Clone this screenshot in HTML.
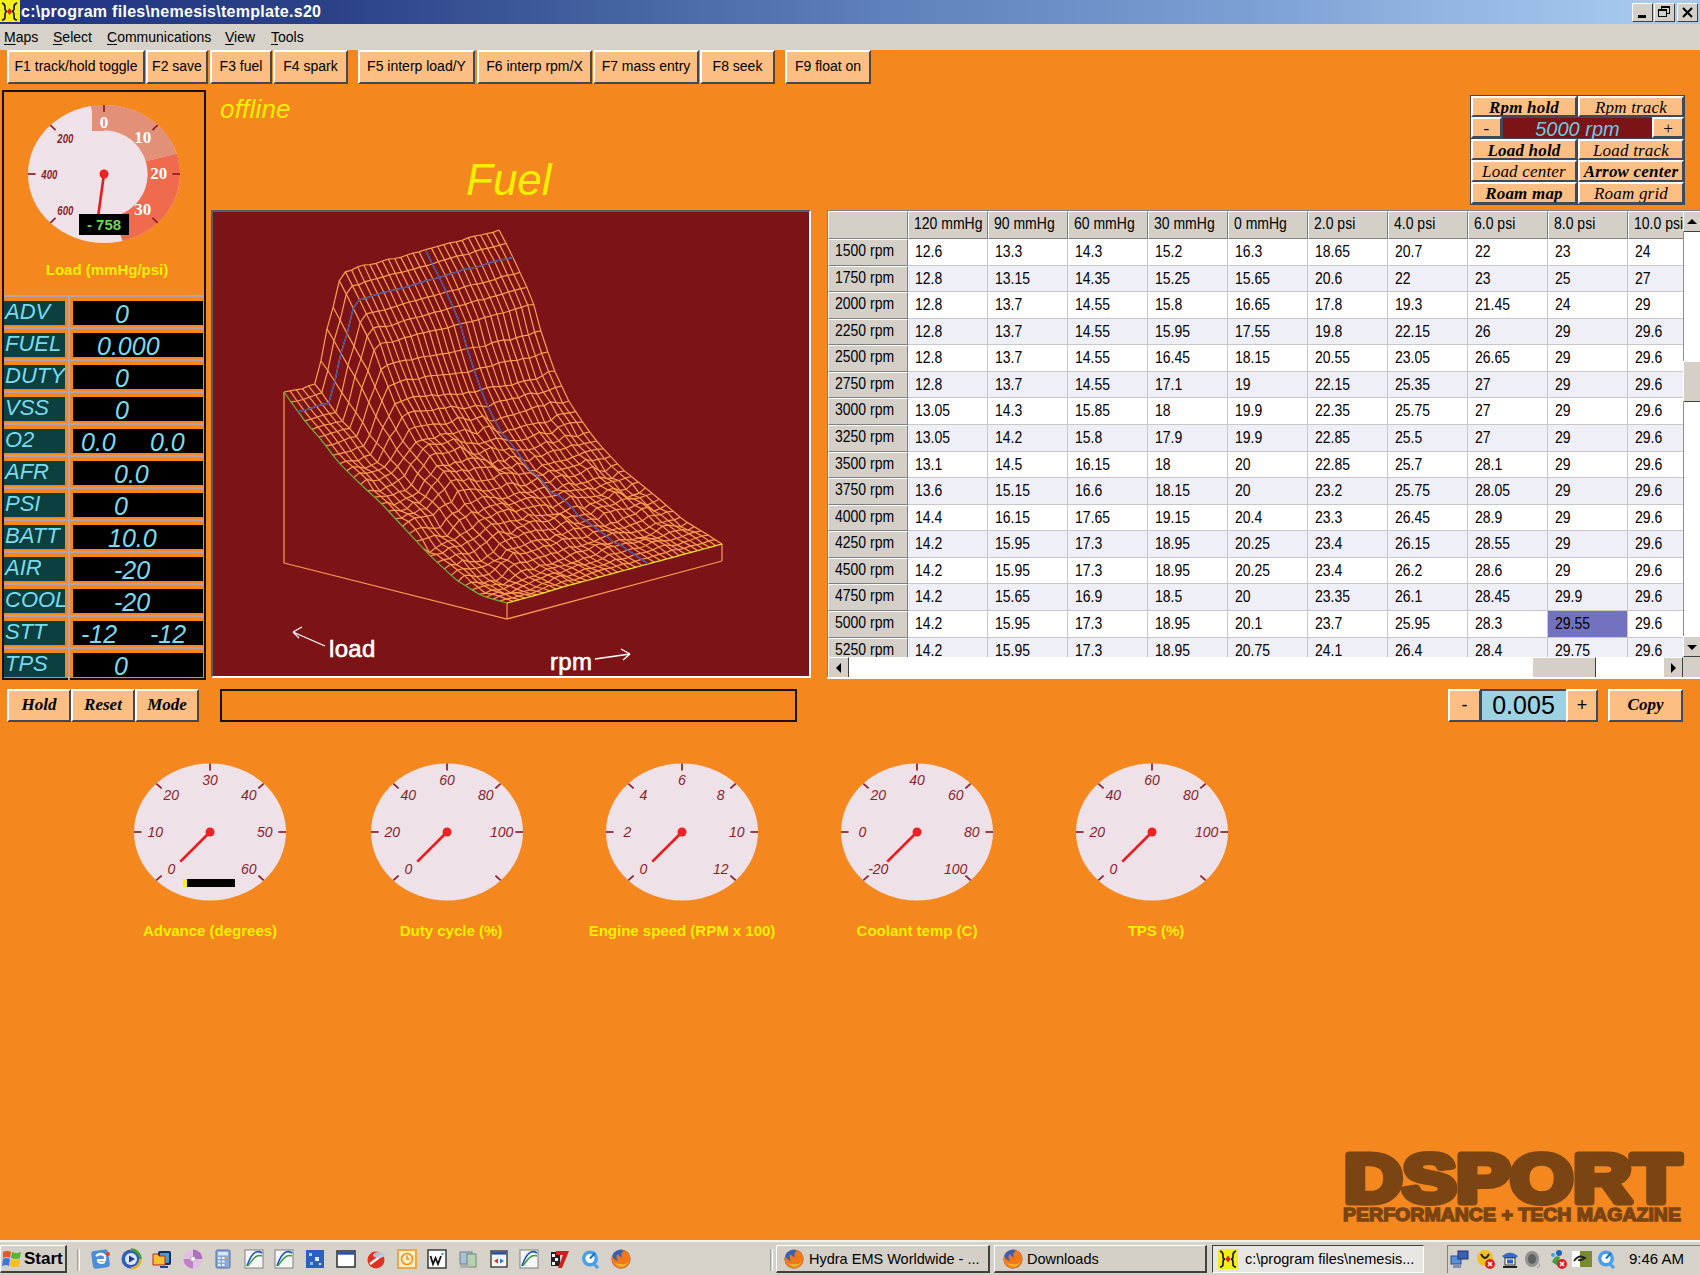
<!DOCTYPE html><html><head><meta charset="utf-8"><style>
*{box-sizing:border-box}
body{margin:0;width:1700px;height:1275px;overflow:hidden;background:#F5871F;position:relative;font-family:"Liberation Sans",sans-serif}
.a{position:absolute}
.btn{position:absolute;background:#FCBE82;border-top:2px solid #fff;border-left:2px solid #fff;border-right:2px solid #3E4A5A;border-bottom:2px solid #3E4A5A;color:#000;text-align:center;white-space:nowrap;overflow:hidden}
.fk{font-size:14px;line-height:28px}
.sv{font-family:"Liberation Serif",serif;font-style:italic}
.t{white-space:nowrap}
.ty{display:inline-block;transform:scaleY(1.17);transform-origin:0 16px}
</style></head><body>

<div class="a" style="left:0;top:0;width:1700px;height:24px;background:linear-gradient(to right,#203584 0%,#2A4186 19%,#4866A4 38%,#5E80BC 52%,#7A9DD2 72%,#92B5E2 85%,#A6C8EE 96%,#A8CAEE 100%)"></div>
<svg class="a" style="left:0;top:0" width="21" height="23" viewBox="0 0 21 23">
<rect x="0" y="0" width="20" height="22" fill="#F2EE1A"/>
<path d="M2 3 Q5 4 5 7 L5 9 Q5 11 7 11.5 Q5 12 5 14 L5 17 Q5 20 2 20" stroke="#111" stroke-width="1.6" fill="none"/>
<path d="M17 3 Q14 4 14 7 L14 9 Q14 11 12 11.5 Q14 12 14 14 L14 17 Q14 20 17 20" stroke="#111" stroke-width="1.6" fill="none"/>
<polygon points="9.5,8 12,11.5 9.5,15 7,11.5" fill="#E01818"/>
</svg>
<div class="a t" style="left:21px;top:3px;font:bold 16px 'Liberation Sans';color:#fff;letter-spacing:0.28px">c:\program files\nemesis\template.s20</div>
<div class="a" style="left:1632px;top:3px;width:21px;height:19px;background:#D4D0C8;border-top:1px solid #fff;border-left:1px solid #fff;border-right:1px solid #404040;border-bottom:1px solid #404040"></div><div class="a" style="left:1638px;top:15px;width:8px;height:3px;background:#000"></div>
<div class="a" style="left:1654px;top:3px;width:21px;height:19px;background:#D4D0C8;border-top:1px solid #fff;border-left:1px solid #fff;border-right:1px solid #404040;border-bottom:1px solid #404040"></div><div class="a" style="left:1661px;top:6px;width:9px;height:8px;border:1px solid #000;border-top-width:2px"></div><div class="a" style="left:1658px;top:9px;width:9px;height:8px;border:1px solid #000;border-top-width:2px;background:#D4D0C8"></div>
<div class="a" style="left:1677px;top:3px;width:21px;height:19px;background:#D4D0C8;border-top:1px solid #fff;border-left:1px solid #fff;border-right:1px solid #404040;border-bottom:1px solid #404040"></div><svg class="a" style="left:1677px;top:3px" width="21" height="19"><path d="M6 5 L15 14 M15 5 L6 14" stroke="#000" stroke-width="2"/></svg>
<div class="a" style="left:0;top:24px;width:1700px;height:26px;background:#D6D2CA"></div>
<div class="a t" style="left:4px;top:29px;font-size:14px;color:#000"><u style="text-decoration-thickness:1px;text-underline-offset:2px">M</u>aps</div>
<div class="a t" style="left:53px;top:29px;font-size:14px;color:#000"><u style="text-decoration-thickness:1px;text-underline-offset:2px">S</u>elect</div>
<div class="a t" style="left:107px;top:29px;font-size:14px;color:#000"><u style="text-decoration-thickness:1px;text-underline-offset:2px">C</u>ommunications</div>
<div class="a t" style="left:225px;top:29px;font-size:14px;color:#000"><u style="text-decoration-thickness:1px;text-underline-offset:2px">V</u>iew</div>
<div class="a t" style="left:271px;top:29px;font-size:14px;color:#000"><u style="text-decoration-thickness:1px;text-underline-offset:2px">T</u>ools</div>
<div class="btn fk" style="left:7px;top:50px;width:138px;height:34px">F1 track/hold toggle</div>
<div class="btn fk" style="left:146px;top:50px;width:62px;height:34px">F2 save</div>
<div class="btn fk" style="left:210px;top:50px;width:62px;height:34px">F3 fuel</div>
<div class="btn fk" style="left:273px;top:50px;width:75px;height:34px">F4 spark</div>
<div class="btn fk" style="left:358px;top:50px;width:117px;height:34px">F5 interp load/Y</div>
<div class="btn fk" style="left:477px;top:50px;width:115px;height:34px">F6 interp rpm/X</div>
<div class="btn fk" style="left:593px;top:50px;width:106px;height:34px">F7 mass entry</div>
<div class="btn fk" style="left:700px;top:50px;width:75px;height:34px">F8 seek</div>
<div class="btn fk" style="left:785px;top:50px;width:86px;height:34px">F9 float on</div>
<div class="a" style="left:2px;top:90px;width:204px;height:590px;border:2px solid #1A1008"></div>
<svg class="a" style="left:24px;top:99px" width="160" height="150" viewBox="24 99 160 150"><ellipse cx="104" cy="174" rx="76" ry="69" fill="#EEE1E8"/><polygon points="90.8,106.0 95.3,105.4 99.9,105.1 104.5,105.0 109.1,105.2 113.6,105.6 118.2,106.2 122.7,107.1 127.1,108.3 131.4,109.6 135.6,111.3 139.7,113.1 143.7,115.2 147.5,117.4 151.2,119.9 154.7,122.6 158.1,125.5 161.2,128.5 164.1,131.8 166.8,135.1 169.3,138.6 171.5,142.3 173.5,146.0 175.2,149.9 176.7,153.8 145.7,161.3 144.9,158.8 143.9,156.3 142.7,154.0 141.4,151.7 140.0,149.4 138.5,147.3 136.8,145.3 135.0,143.4 133.1,141.5 131.1,139.8 129.0,138.3 126.8,136.8 124.5,135.5 122.1,134.4 119.7,133.3 117.2,132.5 114.7,131.7 112.1,131.2 109.5,130.8 106.9,130.5 104.3,130.4 101.7,130.5 99.0,130.7 96.4,131.1" fill="#E39078"/><polygon points="176.7,153.8 178.0,158.3 179.0,162.9 179.7,167.5 180.0,172.2 179.9,176.9 179.5,181.5 178.8,186.1 177.7,190.7 176.3,195.2 174.6,199.6 172.5,203.8 170.1,208.0 167.5,212.0 164.5,215.8 161.2,219.4 157.7,222.8 154.0,226.0 150.0,228.9 145.8,231.6 141.4,234.1 136.9,236.2 132.2,238.1 127.3,239.7 122.4,241.0 114.5,216.3 117.4,215.5 120.2,214.5 122.9,213.3 125.5,211.9 128.0,210.4 130.4,208.7 132.7,206.8 134.8,204.8 136.8,202.7 138.7,200.4 140.4,198.0 141.9,195.5 143.3,192.9 144.5,190.2 145.5,187.4 146.3,184.5 146.9,181.7 147.3,178.7 147.6,175.8 147.6,172.9 147.4,169.9 147.0,167.0 146.5,164.1 145.7,161.3" fill="#F06A4E"/><rect x="92" y="105" width="12" height="26" fill="#E39078"/><line x1="50.3" y1="222.8" x2="55.6" y2="217.9" stroke="#8A1E2A" stroke-width="1.7"/><text x="65.3" y="215.1" font-family="Liberation Sans" font-style="italic" font-weight="bold" font-size="12" fill="#8A1E2A" textLength="16" lengthAdjust="spacingAndGlyphs" text-anchor="middle">600</text><line x1="28.0" y1="174.0" x2="35.6" y2="174.0" stroke="#8A1E2A" stroke-width="1.7"/><text x="49.3" y="179.0" font-family="Liberation Sans" font-style="italic" font-weight="bold" font-size="12" fill="#8A1E2A" textLength="16" lengthAdjust="spacingAndGlyphs" text-anchor="middle">400</text><line x1="50.3" y1="125.2" x2="55.6" y2="130.1" stroke="#8A1E2A" stroke-width="1.7"/><text x="65.3" y="142.9" font-family="Liberation Sans" font-style="italic" font-weight="bold" font-size="12" fill="#8A1E2A" textLength="16" lengthAdjust="spacingAndGlyphs" text-anchor="middle">200</text><line x1="104.0" y1="105.0" x2="104.0" y2="111.9" stroke="#8A1E2A" stroke-width="1.7"/><text x="104.0" y="127.9" font-family="Liberation Serif" font-weight="bold" font-size="17" fill="#FFFFFF" text-anchor="middle">0</text><line x1="157.7" y1="125.2" x2="152.4" y2="130.1" stroke="#8A1E2A" stroke-width="1.7"/><text x="142.7" y="142.9" font-family="Liberation Serif" font-weight="bold" font-size="17" fill="#FFFFFF" text-anchor="middle">10</text><line x1="180.0" y1="174.0" x2="172.4" y2="174.0" stroke="#8A1E2A" stroke-width="1.7"/><text x="158.7" y="179.0" font-family="Liberation Serif" font-weight="bold" font-size="17" fill="#FFFFFF" text-anchor="middle">20</text><line x1="157.7" y1="222.8" x2="152.4" y2="217.9" stroke="#8A1E2A" stroke-width="1.7"/><text x="142.7" y="215.1" font-family="Liberation Serif" font-weight="bold" font-size="17" fill="#FFFFFF" text-anchor="middle">30</text><line x1="104" y1="174" x2="98.2" y2="215.6" stroke="#F01818" stroke-width="2.6"/><circle cx="104" cy="174" r="4.5" fill="#EE2222"/></svg>
<div class="a t" style="left:79px;top:214px;width:50px;height:21px;background:#000;color:#6FD657;font:bold 15px 'Liberation Sans';text-align:center;line-height:21px">- 758</div>
<div class="a t" style="left:4px;top:261px;width:206px;text-align:center;font:bold 15px 'Liberation Sans';color:#F5F000">Load (mmHg/psi)</div>
<div class="a" style="left:4px;top:295px;width:200px;height:2px;background:#B4A2B0"></div>
<div class="a" style="left:4px;top:301px;width:61px;height:24px;background:#0C3F40"></div>
<div class="a" style="left:73px;top:301px;width:130px;height:24px;background:#000"></div>
<div class="a" style="left:4px;top:327px;width:200px;height:2px;background:#B4A2B0"></div>
<div class="a" style="left:4px;top:333px;width:61px;height:24px;background:#0C3F40"></div>
<div class="a" style="left:73px;top:333px;width:130px;height:24px;background:#000"></div>
<div class="a" style="left:4px;top:359px;width:200px;height:2px;background:#B4A2B0"></div>
<div class="a" style="left:4px;top:365px;width:61px;height:24px;background:#0C3F40"></div>
<div class="a" style="left:73px;top:365px;width:130px;height:24px;background:#000"></div>
<div class="a" style="left:4px;top:391px;width:200px;height:2px;background:#B4A2B0"></div>
<div class="a" style="left:4px;top:397px;width:61px;height:24px;background:#0C3F40"></div>
<div class="a" style="left:73px;top:397px;width:130px;height:24px;background:#000"></div>
<div class="a" style="left:4px;top:423px;width:200px;height:2px;background:#B4A2B0"></div>
<div class="a" style="left:4px;top:429px;width:61px;height:24px;background:#0C3F40"></div>
<div class="a" style="left:73px;top:429px;width:130px;height:24px;background:#000"></div>
<div class="a" style="left:4px;top:455px;width:200px;height:2px;background:#B4A2B0"></div>
<div class="a" style="left:4px;top:461px;width:61px;height:24px;background:#0C3F40"></div>
<div class="a" style="left:73px;top:461px;width:130px;height:24px;background:#000"></div>
<div class="a" style="left:4px;top:487px;width:200px;height:2px;background:#B4A2B0"></div>
<div class="a" style="left:4px;top:493px;width:61px;height:24px;background:#0C3F40"></div>
<div class="a" style="left:73px;top:493px;width:130px;height:24px;background:#000"></div>
<div class="a" style="left:4px;top:519px;width:200px;height:2px;background:#B4A2B0"></div>
<div class="a" style="left:4px;top:525px;width:61px;height:24px;background:#0C3F40"></div>
<div class="a" style="left:73px;top:525px;width:130px;height:24px;background:#000"></div>
<div class="a" style="left:4px;top:551px;width:200px;height:2px;background:#B4A2B0"></div>
<div class="a" style="left:4px;top:557px;width:61px;height:24px;background:#0C3F40"></div>
<div class="a" style="left:73px;top:557px;width:130px;height:24px;background:#000"></div>
<div class="a" style="left:4px;top:583px;width:200px;height:2px;background:#B4A2B0"></div>
<div class="a" style="left:4px;top:589px;width:61px;height:24px;background:#0C3F40"></div>
<div class="a" style="left:73px;top:589px;width:130px;height:24px;background:#000"></div>
<div class="a" style="left:4px;top:615px;width:200px;height:2px;background:#B4A2B0"></div>
<div class="a" style="left:4px;top:621px;width:61px;height:24px;background:#0C3F40"></div>
<div class="a" style="left:73px;top:621px;width:130px;height:24px;background:#000"></div>
<div class="a" style="left:4px;top:647px;width:200px;height:2px;background:#B4A2B0"></div>
<div class="a" style="left:4px;top:653px;width:61px;height:24px;background:#0C3F40"></div>
<div class="a" style="left:73px;top:653px;width:130px;height:24px;background:#000"></div>
<div class="a" style="left:68px;top:295px;width:2px;height:385px;background:#B4A2B0"></div>
<svg class="a" style="left:0;top:280px" width="210" height="410" viewBox="0 280 210 410"><text x="5" y="319" font-family="Liberation Sans" font-style="italic" font-size="22" fill="#7ADBEE">ADV</text><text x="115" y="323" font-family="Liberation Sans" font-style="italic" font-size="25" fill="#7ADBEE">0</text><text x="5" y="351" font-family="Liberation Sans" font-style="italic" font-size="22" fill="#7ADBEE">FUEL</text><text x="97" y="355" font-family="Liberation Sans" font-style="italic" font-size="25" fill="#7ADBEE">0.000</text><text x="5" y="383" font-family="Liberation Sans" font-style="italic" font-size="22" fill="#7ADBEE">DUTY</text><text x="115" y="387" font-family="Liberation Sans" font-style="italic" font-size="25" fill="#7ADBEE">0</text><text x="5" y="415" font-family="Liberation Sans" font-style="italic" font-size="22" fill="#7ADBEE">VSS</text><text x="115" y="419" font-family="Liberation Sans" font-style="italic" font-size="25" fill="#7ADBEE">0</text><text x="5" y="447" font-family="Liberation Sans" font-style="italic" font-size="22" fill="#7ADBEE">O2</text><text x="81" y="451" font-family="Liberation Sans" font-style="italic" font-size="25" fill="#7ADBEE">0.0</text><text x="150" y="451" font-family="Liberation Sans" font-style="italic" font-size="25" fill="#7ADBEE">0.0</text><text x="5" y="479" font-family="Liberation Sans" font-style="italic" font-size="22" fill="#7ADBEE">AFR</text><text x="114" y="483" font-family="Liberation Sans" font-style="italic" font-size="25" fill="#7ADBEE">0.0</text><text x="5" y="511" font-family="Liberation Sans" font-style="italic" font-size="22" fill="#7ADBEE">PSI</text><text x="114" y="515" font-family="Liberation Sans" font-style="italic" font-size="25" fill="#7ADBEE">0</text><text x="5" y="543" font-family="Liberation Sans" font-style="italic" font-size="22" fill="#7ADBEE">BATT</text><text x="108" y="547" font-family="Liberation Sans" font-style="italic" font-size="25" fill="#7ADBEE">10.0</text><text x="5" y="575" font-family="Liberation Sans" font-style="italic" font-size="22" fill="#7ADBEE">AIR</text><text x="114" y="579" font-family="Liberation Sans" font-style="italic" font-size="25" fill="#7ADBEE">-20</text><text x="5" y="607" font-family="Liberation Sans" font-style="italic" font-size="22" fill="#7ADBEE">COOL</text><text x="114" y="611" font-family="Liberation Sans" font-style="italic" font-size="25" fill="#7ADBEE">-20</text><text x="5" y="639" font-family="Liberation Sans" font-style="italic" font-size="22" fill="#7ADBEE">STT</text><text x="81" y="643" font-family="Liberation Sans" font-style="italic" font-size="25" fill="#7ADBEE">-12</text><text x="150" y="643" font-family="Liberation Sans" font-style="italic" font-size="25" fill="#7ADBEE">-12</text><text x="5" y="671" font-family="Liberation Sans" font-style="italic" font-size="22" fill="#7ADBEE">TPS</text><text x="114" y="675" font-family="Liberation Sans" font-style="italic" font-size="25" fill="#7ADBEE">0</text></svg>
<div class="a t" style="left:220px;top:93.5px;font:italic 26px 'Liberation Sans';color:#F5F000;letter-spacing:0.2px">offline</div>
<div class="a t" style="left:466px;top:155px;font:italic 44px 'Liberation Sans';color:#F5F000">Fuel</div>
<div class="a" style="left:211px;top:210px;width:600px;height:468px;background:#7C1417;border-top:2px solid #50606C;border-left:2px solid #50606C;border-right:2px solid #fff;border-bottom:2px solid #fff"></div>
<svg class="a" style="left:213px;top:212px" width="596" height="464" viewBox="213 212 596 464"><polyline points="284.0,563.0 507.0,619.0 722.0,561.0" stroke="#F89A50" stroke-width="1.25" fill="none"/><polyline points="284.0,563.0 284.0,392.0" stroke="#F89A50" stroke-width="1.25" fill="none"/><polyline points="507.0,619.0 507.0,603.0" stroke="#F89A50" stroke-width="1.25" fill="none"/><polyline points="722.0,561.0 722.0,544.0" stroke="#F89A50" stroke-width="1.25" fill="none"/><polyline points="500.0,601.1 506.2,598.8 512.3,597.8 518.5,596.2 524.6,594.4 530.7,593.9 536.9,591.3 543.0,588.5 549.2,585.5 555.3,585.0 561.5,582.2 567.6,580.3 573.7,580.0 579.9,577.9 586.0,575.4 592.2,572.7 598.3,570.8 604.5,568.9 610.6,568.0 616.7,566.3 622.9,563.6 629.0,563.6 635.2,561.3 641.3,559.3 647.5,558.0 653.6,556.2 659.7,554.2 665.9,552.6 672.0,549.9 678.2,549.7 684.3,548.4 690.5,545.9 696.6,544.8 702.7,543.4 708.9,540.9 715.0,539.6" stroke="#F89A50" stroke-width="1.25" fill="none"/><polyline points="493.1,599.2 499.2,596.2 505.3,594.3 511.5,593.0 517.6,592.7 523.8,591.5 529.9,589.9 536.1,587.0 542.2,583.5 548.3,582.1 554.5,577.8 560.6,575.5 566.8,576.6 572.9,574.6 579.1,571.6 585.2,568.7 591.3,568.4 597.5,566.5 603.6,564.8 609.8,562.4 615.9,559.2 622.1,559.3 628.2,557.4 634.3,554.6 640.5,553.3 646.6,552.0 652.8,549.8 658.9,547.0 665.1,545.0 671.2,545.5 677.3,545.1 683.5,542.1 689.6,540.5 695.8,538.0 701.9,536.0 708.1,535.1" stroke="#F89A50" stroke-width="1.25" fill="none"/><polyline points="486.1,597.2 492.2,594.2 498.4,592.2 504.5,593.7 510.7,592.8 516.8,589.1 523.0,585.9 529.1,583.5 535.2,579.9 541.4,578.4 547.5,574.9 553.7,572.8 559.8,573.2 566.0,570.2 572.1,567.6 578.2,564.8 584.4,564.9 590.5,563.0 596.7,561.0 602.8,558.6 609.0,554.4 615.1,553.7 621.2,552.5 627.4,550.1 633.5,548.4 639.7,548.2 645.8,545.5 652.0,541.9 658.1,540.9 664.2,540.8 670.4,540.4 676.5,538.3 682.7,536.5 688.8,533.6 695.0,532.2 701.1,530.8" stroke="#F89A50" stroke-width="1.25" fill="none"/><polyline points="479.1,594.3 485.3,593.1 491.4,589.9 497.6,589.8 503.7,588.8 509.8,585.6 516.0,582.9 522.1,580.1 528.3,577.3 534.4,576.0 540.6,572.7 546.7,569.0 552.8,568.0 559.0,566.3 565.1,565.5 571.3,562.9 577.4,561.4 583.6,558.0 589.7,556.9 595.8,554.7 602.0,550.0 608.1,546.9 614.3,546.5 620.4,544.6 626.6,543.0 632.7,543.3 638.8,541.6 645.0,539.1 651.1,538.6 657.3,538.0 663.4,535.6 669.6,532.2 675.7,530.9 681.8,529.7 688.0,530.0 694.1,526.6" stroke="#F89A50" stroke-width="1.25" fill="none"/><polyline points="472.2,589.9 478.3,587.4 484.4,585.8 490.6,585.5 496.7,584.1 502.9,584.9 509.0,580.8 515.2,575.2 521.3,570.9 527.4,569.4 533.6,569.5 539.7,565.2 545.9,565.0 552.0,563.9 558.2,560.6 564.3,558.7 570.4,554.9 576.6,551.9 582.7,551.4 588.9,549.4 595.0,545.0 601.2,543.6 607.3,544.4 613.4,542.3 619.6,539.5 625.7,539.5 631.9,539.8 638.0,537.9 644.2,537.4 650.3,534.8 656.4,531.1 662.6,526.2 668.7,525.2 674.9,525.8 681.0,526.8 687.2,522.4" stroke="#F89A50" stroke-width="1.25" fill="none"/><polyline points="465.2,585.5 471.3,582.1 477.5,582.4 483.6,583.1 489.8,580.5 495.9,581.1 502.0,576.6 508.2,569.0 514.3,564.3 520.5,562.2 526.6,562.4 532.8,559.7 538.9,557.3 545.0,556.1 551.2,553.3 557.3,552.7 563.5,549.4 569.6,546.3 575.8,547.3 581.9,545.7 588.0,543.4 594.2,541.4 600.3,538.4 606.5,535.9 612.6,533.1 618.8,532.6 624.9,532.4 631.0,532.9 637.2,531.3 643.3,530.2 649.5,527.0 655.6,523.3 661.8,522.5 667.9,520.6 674.0,519.8 680.2,517.3" stroke="#F89A50" stroke-width="1.25" fill="none"/><polyline points="458.2,581.2 464.4,575.4 470.5,575.3 476.6,576.6 482.8,575.7 488.9,574.4 495.1,569.2 501.2,562.7 507.4,560.1 513.5,552.4 519.6,553.8 525.8,553.1 531.9,551.2 538.1,549.0 544.2,545.7 550.4,545.8 556.5,543.0 562.6,538.7 568.8,538.9 574.9,538.0 581.1,538.4 587.2,536.7 593.4,531.8 599.5,530.8 605.6,530.4 611.8,529.8 617.9,528.5 624.1,527.8 630.2,525.2 636.4,522.8 642.5,520.7 648.6,516.0 654.8,515.4 660.9,514.7 667.1,511.9 673.2,511.3" stroke="#F89A50" stroke-width="1.25" fill="none"/><polyline points="451.2,575.4 457.4,570.0 463.5,568.7 469.7,568.9 475.8,568.4 482.0,566.9 488.1,564.6 494.2,560.8 500.4,558.2 506.5,549.7 512.7,548.6 518.8,547.3 525.0,544.8 531.1,541.4 537.2,540.1 543.4,539.3 549.5,539.6 555.7,534.7 561.8,534.7 568.0,531.5 574.1,528.3 580.2,528.7 586.4,526.7 592.5,525.6 598.7,525.9 604.8,526.4 611.0,522.7 617.1,522.3 623.2,518.2 629.4,516.2 635.5,513.9 641.7,508.7 647.8,507.4 654.0,511.0 660.1,508.6 666.2,505.3" stroke="#F89A50" stroke-width="1.25" fill="none"/><polyline points="444.3,568.9 450.4,564.3 456.6,564.8 462.7,560.0 468.9,561.7 475.0,561.7 481.1,561.2 487.3,555.9 493.4,551.9 499.6,543.7 505.7,540.8 511.9,538.0 518.0,536.7 524.1,533.1 530.3,531.8 536.4,530.0 542.6,530.7 548.7,529.3 554.9,529.1 561.0,524.2 567.1,521.0 573.3,523.1 579.4,523.7 585.6,520.5 591.7,518.9 597.9,519.7 604.0,513.0 610.1,511.8 616.3,509.6 622.4,509.1 628.6,508.8 634.7,505.4 640.9,502.6 647.0,505.1 653.1,502.2 659.3,499.3" stroke="#F89A50" stroke-width="1.25" fill="none"/><polyline points="437.3,562.4 443.5,559.7 449.6,558.6 455.7,554.5 461.9,553.4 468.0,554.0 474.2,551.4 480.3,546.3 486.5,542.2 492.6,536.2 498.7,531.5 504.9,532.8 511.0,533.8 517.2,527.9 523.3,525.8 529.5,521.9 535.6,520.6 541.7,521.7 547.9,521.4 554.0,518.1 560.2,513.4 566.3,517.5 572.5,515.9 578.6,516.2 584.7,514.2 590.9,514.1 597.0,507.8 603.2,506.4 609.3,505.8 615.5,503.6 621.6,499.5 627.7,498.7 633.9,498.9 640.0,497.7 646.2,495.5 652.3,493.5" stroke="#F89A50" stroke-width="1.25" fill="none"/><polyline points="430.3,555.9 436.5,554.3 442.6,553.1 448.8,547.9 454.9,546.3 461.1,546.0 467.2,541.8 473.3,539.3 479.5,534.8 485.6,528.6 491.8,523.7 497.9,524.2 504.1,522.7 510.2,520.8 516.3,520.7 522.5,519.3 528.6,514.4 534.8,515.5 540.9,515.7 547.1,514.9 553.2,514.6 559.3,514.1 565.5,510.9 571.6,507.2 577.8,506.1 583.9,508.8 590.1,503.7 596.2,502.4 602.3,499.5 608.5,498.0 614.6,491.9 620.8,493.2 626.9,497.6 633.1,495.1 639.2,493.2 645.3,487.8" stroke="#F89A50" stroke-width="1.25" fill="none"/><polyline points="423.4,548.6 429.5,552.6 435.7,547.8 441.8,544.3 447.9,541.0 454.1,540.0 460.2,534.7 466.4,531.7 472.5,527.7 478.7,520.9 484.8,518.3 490.9,517.0 497.1,512.6 503.2,510.6 509.4,509.2 515.5,511.7 521.7,509.1 527.8,507.6 533.9,506.3 540.1,505.1 546.2,505.0 552.4,507.8 558.5,504.4 564.7,500.4 570.8,495.9 576.9,497.6 583.1,497.3 589.2,497.1 595.4,496.3 601.5,495.4 607.7,489.8 613.8,488.4 619.9,490.3 626.1,489.4 632.2,483.8 638.4,482.2" stroke="#F89A50" stroke-width="1.25" fill="none"/><polyline points="416.4,541.1 422.5,539.7 428.7,537.6 434.8,535.1 441.0,536.7 447.1,536.1 453.3,527.5 459.4,520.0 465.5,517.1 471.7,511.6 477.8,513.2 484.0,508.6 490.1,506.2 496.3,504.5 502.4,503.0 508.5,505.1 514.7,503.0 520.8,500.1 527.0,498.2 533.1,497.0 539.3,498.4 545.4,497.5 551.5,496.3 557.7,494.8 563.8,491.0 570.0,491.1 576.1,489.6 582.3,490.1 588.4,487.9 594.5,489.3 600.7,485.8 606.8,483.0 613.0,481.4 619.1,480.5 625.3,478.2 631.4,476.5" stroke="#F89A50" stroke-width="1.25" fill="none"/><polyline points="409.4,533.6 415.6,529.5 421.7,527.5 427.9,527.9 434.0,528.3 440.2,527.7 446.3,519.0 452.4,513.3 458.6,511.2 464.7,504.0 470.9,503.0 477.0,499.7 483.2,496.3 489.3,497.2 495.4,497.5 501.6,498.8 507.7,497.6 513.9,494.2 520.0,492.1 526.2,492.7 532.3,491.8 538.4,489.2 544.6,486.8 550.7,492.4 556.9,489.8 563.0,485.3 569.2,482.9 575.3,484.9 581.4,483.1 587.6,481.8 593.7,478.9 599.9,477.5 606.0,478.2 612.2,478.4 618.3,472.1 624.4,470.9" stroke="#F89A50" stroke-width="1.25" fill="none"/><polyline points="402.5,526.2 408.6,521.6 414.8,517.9 420.9,517.2 427.0,516.2 433.2,515.0 439.3,508.5 445.5,504.4 451.6,502.3 457.8,490.9 463.9,490.1 470.0,489.1 476.2,489.1 482.3,490.9 488.5,490.8 494.6,489.0 500.8,487.7 506.9,483.4 513.0,483.0 519.2,485.5 525.3,485.5 531.5,481.9 537.6,478.1 543.8,482.6 549.9,482.5 556.0,477.1 562.2,475.0 568.3,477.0 574.5,476.0 580.6,473.4 586.8,469.0 592.9,466.7 599.0,470.5 605.2,471.6 611.3,466.1 617.5,463.9" stroke="#F89A50" stroke-width="1.25" fill="none"/><polyline points="395.5,518.7 401.6,518.1 407.8,513.9 413.9,513.4 420.1,509.0 426.2,508.8 432.4,501.7 438.5,494.3 444.6,489.2 450.8,481.2 456.9,479.3 463.1,481.2 469.2,478.1 475.4,481.3 481.5,480.9 487.6,480.0 493.8,478.8 499.9,473.5 506.1,473.2 512.2,472.8 518.4,474.6 524.5,473.4 530.6,472.6 536.8,475.3 542.9,475.1 549.1,470.4 555.2,470.8 561.4,469.3 567.5,467.9 573.6,466.1 579.8,464.4 585.9,459.4 592.1,460.8 598.2,459.2 604.4,458.6 610.5,456.4" stroke="#F89A50" stroke-width="1.25" fill="none"/><polyline points="388.5,511.2 394.7,510.1 400.8,510.9 407.0,508.6 413.1,502.1 419.2,503.0 425.4,496.6 431.5,486.6 437.7,480.1 443.8,471.2 450.0,471.0 456.1,471.9 462.2,469.6 468.4,471.4 474.5,468.1 480.7,467.3 486.8,467.3 493.0,466.6 499.1,470.3 505.2,467.9 511.4,467.9 517.5,463.0 523.7,464.7 529.8,470.5 536.0,470.7 542.1,465.0 548.2,464.0 554.4,462.2 560.5,461.0 566.7,459.8 572.8,457.1 579.0,454.6 585.1,451.9 591.2,450.4 597.4,449.3 603.5,448.8" stroke="#F89A50" stroke-width="1.25" fill="none"/><polyline points="381.6,503.7 387.7,502.5 393.8,505.0 400.0,501.8 406.1,498.3 412.3,495.9 418.4,492.1 424.6,480.5 430.7,474.4 436.8,465.8 443.0,465.1 449.1,465.5 455.3,462.0 461.4,462.1 467.6,458.6 473.7,458.0 479.8,459.0 486.0,460.2 492.1,464.0 498.3,460.2 504.4,461.5 510.6,456.4 516.7,457.0 522.8,460.0 529.0,461.0 535.1,456.0 541.3,456.6 547.4,452.7 553.6,450.4 559.7,449.8 565.8,448.1 572.0,445.0 578.1,445.3 584.3,443.4 590.4,442.4 596.6,441.0" stroke="#F89A50" stroke-width="1.25" fill="none"/><polyline points="374.6,497.1 380.7,496.4 386.9,496.1 393.0,494.8 399.2,491.5 405.3,490.6 411.5,484.8 417.6,473.5 423.7,465.7 429.9,455.8 436.0,453.2 442.2,453.6 448.3,452.5 454.5,449.9 460.6,446.6 466.7,450.8 472.9,454.0 479.0,453.8 485.2,450.0 491.3,447.5 497.5,449.5 503.6,450.4 509.7,448.1 515.9,450.4 522.0,449.8 528.2,449.8 534.3,448.3 540.5,445.0 546.6,441.4 552.7,443.0 558.9,440.8 565.0,435.3 571.2,435.9 577.3,436.7 583.5,433.4 589.6,431.8" stroke="#F89A50" stroke-width="1.25" fill="none"/><polyline points="367.6,490.7 373.8,490.5 379.9,491.3 386.1,487.0 392.2,484.6 398.3,480.2 404.5,475.9 410.6,464.4 416.8,458.0 422.9,448.9 429.1,444.0 435.2,444.1 441.3,444.3 447.5,442.0 453.6,438.6 459.8,441.0 465.9,443.1 472.1,442.8 478.2,444.2 484.3,442.3 490.5,440.4 496.6,438.2 502.8,439.1 508.9,440.7 515.1,440.7 521.2,440.4 527.3,438.6 533.5,435.4 539.6,432.2 545.8,433.9 551.9,433.3 558.1,427.3 564.2,424.5 570.3,422.9 576.5,422.4 582.6,422.1" stroke="#F89A50" stroke-width="1.25" fill="none"/><polyline points="360.7,484.3 366.8,479.3 372.9,480.9 379.1,480.0 385.2,476.1 391.4,473.3 397.5,466.5 403.7,458.1 409.8,449.8 415.9,442.1 422.1,439.9 428.2,438.7 434.4,438.3 440.5,434.3 446.7,433.3 452.8,433.9 458.9,431.5 465.1,429.2 471.2,432.1 477.4,434.1 483.5,427.5 489.7,426.1 495.8,430.7 501.9,433.3 508.1,429.9 514.2,429.3 520.4,426.9 526.5,425.0 532.7,424.0 538.8,422.7 544.9,422.9 551.1,420.2 557.2,414.8 563.4,413.7 569.5,412.8 575.7,411.7" stroke="#F89A50" stroke-width="1.25" fill="none"/><polyline points="353.7,477.6 359.8,472.8 366.0,473.3 372.1,472.0 378.3,470.2 384.4,467.0 390.5,459.5 396.7,449.4 402.8,441.2 409.0,429.8 415.1,427.0 421.3,425.8 427.4,425.0 433.5,424.0 439.7,424.1 445.8,424.3 452.0,421.7 458.1,417.2 464.3,418.6 470.4,420.6 476.5,418.2 482.7,415.8 488.8,420.5 495.0,420.8 501.1,417.8 507.3,416.1 513.4,414.8 519.5,412.5 525.7,410.8 531.8,408.1 538.0,405.9 544.1,405.9 550.3,402.0 556.4,402.7 562.5,403.0 568.7,401.0" stroke="#F89A50" stroke-width="1.25" fill="none"/><polyline points="346.7,470.6 352.9,466.8 359.0,466.9 365.1,468.4 371.3,465.2 377.4,462.4 383.6,449.6 389.7,437.2 395.9,429.3 402.0,417.1 408.1,413.1 414.3,410.9 420.4,411.0 426.6,410.7 432.7,410.5 438.9,408.2 445.0,408.3 451.1,406.2 457.3,407.3 463.4,408.8 469.6,407.3 475.7,405.4 481.9,406.1 488.0,406.9 494.1,402.9 500.3,400.8 506.4,400.1 512.6,398.4 518.7,397.9 524.9,394.7 531.0,393.0 537.1,394.0 543.3,392.2 549.4,390.1 555.6,387.4 561.7,386.1" stroke="#F89A50" stroke-width="1.25" fill="none"/><polyline points="339.8,463.6 345.9,461.1 352.0,460.6 358.2,460.8 364.3,456.6 370.5,454.7 376.6,442.9 382.8,427.3 388.9,416.3 395.0,403.8 401.2,401.4 407.3,398.9 413.5,396.7 419.6,396.3 425.8,396.4 431.9,394.6 438.0,395.9 444.2,394.5 450.3,393.9 456.5,394.6 462.6,393.9 468.8,391.8 474.9,392.1 481.0,389.8 487.2,387.6 493.3,386.6 499.5,386.6 505.6,385.7 511.8,385.2 517.9,382.7 524.0,380.8 530.2,379.8 536.3,379.1 542.5,375.7 548.6,371.5 554.8,371.2" stroke="#F89A50" stroke-width="1.25" fill="none"/><polyline points="332.8,455.1 338.9,453.8 345.1,452.3 351.2,451.0 357.4,447.4 363.5,446.3 369.6,434.9 375.8,416.2 381.9,400.9 388.1,386.6 394.2,384.0 400.4,381.4 406.5,379.1 412.6,379.5 418.8,379.0 424.9,376.6 431.1,375.7 437.2,375.5 443.4,374.7 449.5,374.4 455.6,373.4 461.8,372.5 467.9,372.3 474.1,369.9 480.2,367.8 486.4,367.2 492.5,365.6 498.6,362.9 504.8,361.7 510.9,360.7 517.1,360.5 523.2,358.4 529.4,358.2 535.5,356.0 541.6,353.3 547.8,351.8" stroke="#F89A50" stroke-width="1.25" fill="none"/><polyline points="325.8,445.6 332.0,444.8 338.1,442.6 344.2,440.0 350.4,437.4 356.5,436.6 362.7,422.3 368.8,402.4 375.0,386.8 381.1,369.5 387.2,365.1 393.4,362.9 399.5,361.4 405.7,360.1 411.8,359.8 418.0,357.9 424.1,356.5 430.2,356.1 436.4,354.8 442.5,353.8 448.7,353.1 454.8,351.5 461.0,350.1 467.1,348.5 473.2,347.4 479.4,347.0 485.5,346.0 491.7,342.9 497.8,341.2 504.0,339.8 510.1,340.2 516.2,337.8 522.4,335.9 528.5,335.1 534.7,332.2 540.8,330.8" stroke="#F89A50" stroke-width="1.25" fill="none"/><polyline points="318.8,436.9 325.0,435.5 331.1,433.2 337.3,431.5 343.4,429.4 349.6,428.4 355.7,412.1 361.8,388.0 368.0,370.9 374.1,350.1 380.3,343.5 386.4,342.3 392.6,342.0 398.7,339.9 404.8,337.6 411.0,336.3 417.1,334.2 423.3,332.9 429.4,331.3 435.6,330.2 441.7,329.1 447.8,327.8 454.0,325.4 460.1,323.9 466.3,322.6 472.4,321.4 478.6,319.6 484.7,317.4 490.8,316.0 497.0,314.1 503.1,313.0 509.3,311.0 515.4,308.8 521.6,307.4 527.7,305.0 533.8,304.6" stroke="#F89A50" stroke-width="1.25" fill="none"/><polyline points="311.9,429.3 318.0,427.1 324.2,425.0 330.3,424.0 336.4,422.2 342.6,421.5 348.7,402.7 354.9,376.6 361.0,358.6 367.2,336.1 373.3,328.1 379.4,326.5 385.6,326.6 391.7,325.5 397.9,322.9 404.0,320.5 410.2,318.8 416.3,317.5 422.4,316.2 428.6,314.1 434.7,312.1 440.9,311.1 447.0,309.0 453.2,307.2 459.3,305.9 465.4,304.4 471.6,302.0 477.7,300.1 483.9,299.7 490.0,297.4 496.2,295.8 502.3,294.2 508.4,291.8 514.6,290.3 520.7,288.7 526.9,287.5" stroke="#F89A50" stroke-width="1.25" fill="none"/><polyline points="304.9,420.8 311.0,419.1 317.2,417.1 323.3,415.0 329.5,413.6 335.6,412.6 341.8,392.7 347.9,365.4 354.0,346.1 360.2,322.4 366.3,313.8 372.5,312.4 378.6,311.1 384.8,310.0 390.9,307.9 397.0,306.0 403.2,303.9 409.3,302.0 415.5,300.6 421.6,298.9 427.8,297.1 433.9,295.7 440.0,294.0 446.2,291.9 452.3,290.5 458.5,289.3 464.6,286.7 470.8,285.0 476.9,284.1 483.0,282.9 489.2,281.1 495.3,279.4 501.5,276.7 507.6,275.3 513.8,274.4 519.9,272.4" stroke="#F89A50" stroke-width="1.25" fill="none"/><polyline points="297.9,411.5 304.1,410.5 310.2,408.6 316.4,406.1 322.5,404.6 328.7,403.2 334.8,381.5 340.9,353.3 347.1,333.6 353.2,308.1 359.4,299.6 365.5,298.6 371.7,295.9 377.8,294.1 383.9,292.3 390.1,290.9 396.2,289.4 402.4,288.1 408.5,286.5 414.7,284.3 420.8,282.6 426.9,280.4 433.1,279.2 439.2,277.3 445.4,275.5 451.5,273.6 457.7,271.8 463.8,269.2 469.9,268.5 476.1,267.4 482.2,265.5 488.4,263.2 494.5,261.3 500.7,259.9 506.8,259.1 512.9,257.3" stroke="#F89A50" stroke-width="1.25" fill="none"/><polyline points="291.0,401.8 297.1,401.0 303.3,399.5 309.4,397.1 315.5,395.0 321.7,392.7 327.8,370.5 334.0,340.8 340.1,320.3 346.3,294.1 352.4,285.6 358.5,284.9 364.7,281.9 370.8,280.1 377.0,278.7 383.1,276.9 389.3,274.8 395.4,273.4 401.5,272.4 407.7,270.6 413.8,269.1 420.0,267.1 426.1,265.9 432.3,264.0 438.4,261.7 444.5,259.8 450.7,258.1 456.8,256.1 463.0,255.2 469.1,254.0 475.3,251.1 481.4,249.4 487.5,248.4 493.7,246.9 499.8,245.1 506.0,243.4" stroke="#F89A50" stroke-width="1.25" fill="none"/><polyline points="284.0,392.0 290.1,390.8 296.3,389.7 302.4,388.8 308.6,385.9 314.7,384.0 320.9,360.9 327.0,328.9 333.1,307.2 339.3,280.8 345.4,271.9 351.6,270.1 357.7,266.9 363.9,265.0 370.0,264.7 376.1,263.4 382.3,261.0 388.4,259.2 394.6,258.5 400.7,257.3 406.9,255.0 413.0,253.2 419.1,251.9 425.3,249.7 431.4,248.1 437.6,246.3 443.7,244.7 449.9,242.8 456.0,241.8 462.1,240.4 468.3,237.7 474.4,236.1 480.6,235.0 486.7,233.7 492.9,232.4 499.0,230.0" stroke="#F89A50" stroke-width="1.25" fill="none"/><polyline points="513.1,601.3 506.2,598.8 499.2,596.2 492.2,594.2 485.3,593.1 478.3,587.4 471.3,582.1 464.4,575.4 457.4,570.0 450.4,564.3 443.5,559.7 436.5,554.3 429.5,552.6 422.5,539.7 415.6,529.5 408.6,521.6 401.6,518.1 394.7,510.1 387.7,502.5 380.7,496.4 373.8,490.5 366.8,479.3 359.8,472.8 352.9,466.8 345.9,461.1 338.9,453.8 332.0,444.8 325.0,435.5 318.0,427.1 311.0,419.1 304.1,410.5 297.1,401.0 290.1,390.8" stroke="#F89A50" stroke-width="1.25" fill="none"/><polyline points="519.3,599.7 512.3,597.8 505.3,594.3 498.4,592.2 491.4,589.9 484.4,585.8 477.5,582.4 470.5,575.3 463.5,568.7 456.6,564.8 449.6,558.6 442.6,553.1 435.7,547.8 428.7,537.6 421.7,527.5 414.8,517.9 407.8,513.9 400.8,510.9 393.8,505.0 386.9,496.1 379.9,491.3 372.9,480.9 366.0,473.3 359.0,466.9 352.0,460.6 345.1,452.3 338.1,442.6 331.1,433.2 324.2,425.0 317.2,417.1 310.2,408.6 303.3,399.5 296.3,389.7" stroke="#F89A50" stroke-width="1.25" fill="none"/><polyline points="525.4,598.0 518.5,596.2 511.5,593.0 504.5,593.7 497.6,589.8 490.6,585.5 483.6,583.1 476.6,576.6 469.7,568.9 462.7,560.0 455.7,554.5 448.8,547.9 441.8,544.3 434.8,535.1 427.9,527.9 420.9,517.2 413.9,513.4 407.0,508.6 400.0,501.8 393.0,494.8 386.1,487.0 379.1,480.0 372.1,472.0 365.1,468.4 358.2,460.8 351.2,451.0 344.2,440.0 337.3,431.5 330.3,424.0 323.3,415.0 316.4,406.1 309.4,397.1 302.4,388.8" stroke="#F89A50" stroke-width="1.25" fill="none"/><polyline points="531.6,596.4 524.6,594.4 517.6,592.7 510.7,592.8 503.7,588.8 496.7,584.1 489.8,580.5 482.8,575.7 475.8,568.4 468.9,561.7 461.9,553.4 454.9,546.3 447.9,541.0 441.0,536.7 434.0,528.3 427.0,516.2 420.1,509.0 413.1,502.1 406.1,498.3 399.2,491.5 392.2,484.6 385.2,476.1 378.3,470.2 371.3,465.2 364.3,456.6 357.4,447.4 350.4,437.4 343.4,429.4 336.4,422.2 329.5,413.6 322.5,404.6 315.5,395.0 308.6,385.9" stroke="#F89A50" stroke-width="1.25" fill="none"/><polyline points="537.7,594.7 530.7,593.9 523.8,591.5 516.8,589.1 509.8,585.6 502.9,584.9 495.9,581.1 488.9,574.4 482.0,566.9 475.0,561.7 468.0,554.0 461.1,546.0 454.1,540.0 447.1,536.1 440.2,527.7 433.2,515.0 426.2,508.8 419.2,503.0 412.3,495.9 405.3,490.6 398.3,480.2 391.4,473.3 384.4,467.0 377.4,462.4 370.5,454.7 363.5,446.3 356.5,436.6 349.6,428.4 342.6,421.5 335.6,412.6 328.7,403.2 321.7,392.7 314.7,384.0" stroke="#F89A50" stroke-width="1.25" fill="none"/><polyline points="543.9,592.8 536.9,591.3 529.9,589.9 523.0,585.9 516.0,582.9 509.0,580.8 502.0,576.6 495.1,569.2 488.1,564.6 481.1,561.2 474.2,551.4 467.2,541.8 460.2,534.7 453.3,527.5 446.3,519.0 439.3,508.5 432.4,501.7 425.4,496.6 418.4,492.1 411.5,484.8 404.5,475.9 397.5,466.5 390.5,459.5 383.6,449.6 376.6,442.9 369.6,434.9 362.7,422.3 355.7,412.1 348.7,402.7 341.8,392.7 334.8,381.5 327.8,370.5 320.9,360.9" stroke="#F89A50" stroke-width="1.25" fill="none"/><polyline points="550.0,590.9 543.0,588.5 536.1,587.0 529.1,583.5 522.1,580.1 515.2,575.2 508.2,569.0 501.2,562.7 494.2,560.8 487.3,555.9 480.3,546.3 473.3,539.3 466.4,531.7 459.4,520.0 452.4,513.3 445.5,504.4 438.5,494.3 431.5,486.6 424.6,480.5 417.6,473.5 410.6,464.4 403.7,458.1 396.7,449.4 389.7,437.2 382.8,427.3 375.8,416.2 368.8,402.4 361.8,388.0 354.9,376.6 347.9,365.4 340.9,353.3 334.0,340.8 327.0,328.9" stroke="#F89A50" stroke-width="1.25" fill="none"/><polyline points="556.1,589.1 549.2,585.5 542.2,583.5 535.2,579.9 528.3,577.3 521.3,570.9 514.3,564.3 507.4,560.1 500.4,558.2 493.4,551.9 486.5,542.2 479.5,534.8 472.5,527.7 465.5,517.1 458.6,511.2 451.6,502.3 444.6,489.2 437.7,480.1 430.7,474.4 423.7,465.7 416.8,458.0 409.8,449.8 402.8,441.2 395.9,429.3 388.9,416.3 381.9,400.9 375.0,386.8 368.0,370.9 361.0,358.6 354.0,346.1 347.1,333.6 340.1,320.3 333.1,307.2" stroke="#F89A50" stroke-width="1.25" fill="none"/><polyline points="562.3,587.2 555.3,585.0 548.3,582.1 541.4,578.4 534.4,576.0 527.4,569.4 520.5,562.2 513.5,552.4 506.5,549.7 499.6,543.7 492.6,536.2 485.6,528.6 478.7,520.9 471.7,511.6 464.7,504.0 457.8,490.9 450.8,481.2 443.8,471.2 436.8,465.8 429.9,455.8 422.9,448.9 415.9,442.1 409.0,429.8 402.0,417.1 395.0,403.8 388.1,386.6 381.1,369.5 374.1,350.1 367.2,336.1 360.2,322.4 353.2,308.1 346.3,294.1 339.3,280.8" stroke="#F89A50" stroke-width="1.25" fill="none"/><polyline points="568.4,585.4 561.5,582.2 554.5,577.8 547.5,574.9 540.6,572.7 533.6,569.5 526.6,562.4 519.6,553.8 512.7,548.6 505.7,540.8 498.7,531.5 491.8,523.7 484.8,518.3 477.8,513.2 470.9,503.0 463.9,490.1 456.9,479.3 450.0,471.0 443.0,465.1 436.0,453.2 429.1,444.0 422.1,439.9 415.1,427.0 408.1,413.1 401.2,401.4 394.2,384.0 387.2,365.1 380.3,343.5 373.3,328.1 366.3,313.8 359.4,299.6 352.4,285.6 345.4,271.9" stroke="#F89A50" stroke-width="1.25" fill="none"/><polyline points="574.6,583.8 567.6,580.3 560.6,575.5 553.7,572.8 546.7,569.0 539.7,565.2 532.8,559.7 525.8,553.1 518.8,547.3 511.9,538.0 504.9,532.8 497.9,524.2 490.9,517.0 484.0,508.6 477.0,499.7 470.0,489.1 463.1,481.2 456.1,471.9 449.1,465.5 442.2,453.6 435.2,444.1 428.2,438.7 421.3,425.8 414.3,410.9 407.3,398.9 400.4,381.4 393.4,362.9 386.4,342.3 379.4,326.5 372.5,312.4 365.5,298.6 358.5,284.9 351.6,270.1" stroke="#F89A50" stroke-width="1.25" fill="none"/><polyline points="580.7,582.1 573.7,580.0 566.8,576.6 559.8,573.2 552.8,568.0 545.9,565.0 538.9,557.3 531.9,551.2 525.0,544.8 518.0,536.7 511.0,533.8 504.1,522.7 497.1,512.6 490.1,506.2 483.2,496.3 476.2,489.1 469.2,478.1 462.2,469.6 455.3,462.0 448.3,452.5 441.3,444.3 434.4,438.3 427.4,425.0 420.4,411.0 413.5,396.7 406.5,379.1 399.5,361.4 392.6,342.0 385.6,326.6 378.6,311.1 371.7,295.9 364.7,281.9 357.7,266.9" stroke="#F89A50" stroke-width="1.25" fill="none"/><polyline points="586.9,580.5 579.9,577.9 572.9,574.6 566.0,570.2 559.0,566.3 552.0,563.9 545.0,556.1 538.1,549.0 531.1,541.4 524.1,533.1 517.2,527.9 510.2,520.8 503.2,510.6 496.3,504.5 489.3,497.2 482.3,490.9 475.4,481.3 468.4,471.4 461.4,462.1 454.5,449.9 447.5,442.0 440.5,434.3 433.5,424.0 426.6,410.7 419.6,396.3 412.6,379.5 405.7,360.1 398.7,339.9 391.7,325.5 384.8,310.0 377.8,294.1 370.8,280.1 363.9,265.0" stroke="#F89A50" stroke-width="1.25" fill="none"/><polyline points="593.0,578.8 586.0,575.4 579.1,571.6 572.1,567.6 565.1,565.5 558.2,560.6 551.2,553.3 544.2,545.7 537.2,540.1 530.3,531.8 523.3,525.8 516.3,520.7 509.4,509.2 502.4,503.0 495.4,497.5 488.5,490.8 481.5,480.9 474.5,468.1 467.6,458.6 460.6,446.6 453.6,438.6 446.7,433.3 439.7,424.1 432.7,410.5 425.8,396.4 418.8,379.0 411.8,359.8 404.8,337.6 397.9,322.9 390.9,307.9 383.9,292.3 377.0,278.7 370.0,264.7" stroke="#F89A50" stroke-width="1.25" fill="none"/><polyline points="599.1,577.1 592.2,572.7 585.2,568.7 578.2,564.8 571.3,562.9 564.3,558.7 557.3,552.7 550.4,545.8 543.4,539.3 536.4,530.0 529.5,521.9 522.5,519.3 515.5,511.7 508.5,505.1 501.6,498.8 494.6,489.0 487.6,480.0 480.7,467.3 473.7,458.0 466.7,450.8 459.8,441.0 452.8,433.9 445.8,424.3 438.9,408.2 431.9,394.6 424.9,376.6 418.0,357.9 411.0,336.3 404.0,320.5 397.0,306.0 390.1,290.9 383.1,276.9 376.1,263.4" stroke="#F89A50" stroke-width="1.25" fill="none"/><polyline points="605.3,575.5 598.3,570.8 591.3,568.4 584.4,564.9 577.4,561.4 570.4,554.9 563.5,549.4 556.5,543.0 549.5,539.6 542.6,530.7 535.6,520.6 528.6,514.4 521.7,509.1 514.7,503.0 507.7,497.6 500.8,487.7 493.8,478.8 486.8,467.3 479.8,459.0 472.9,454.0 465.9,443.1 458.9,431.5 452.0,421.7 445.0,408.3 438.0,395.9 431.1,375.7 424.1,356.5 417.1,334.2 410.2,318.8 403.2,303.9 396.2,289.4 389.3,274.8 382.3,261.0" stroke="#F89A50" stroke-width="1.25" fill="none"/><polyline points="611.4,573.8 604.5,568.9 597.5,566.5 590.5,563.0 583.6,558.0 576.6,551.9 569.6,546.3 562.6,538.7 555.7,534.7 548.7,529.3 541.7,521.7 534.8,515.5 527.8,507.6 520.8,500.1 513.9,494.2 506.9,483.4 499.9,473.5 493.0,466.6 486.0,460.2 479.0,453.8 472.1,442.8 465.1,429.2 458.1,417.2 451.1,406.2 444.2,394.5 437.2,375.5 430.2,356.1 423.3,332.9 416.3,317.5 409.3,302.0 402.4,288.1 395.4,273.4 388.4,259.2" stroke="#F89A50" stroke-width="1.25" fill="none"/><polyline points="617.6,572.2 610.6,568.0 603.6,564.8 596.7,561.0 589.7,556.9 582.7,551.4 575.8,547.3 568.8,538.9 561.8,534.7 554.9,529.1 547.9,521.4 540.9,515.7 533.9,506.3 527.0,498.2 520.0,492.1 513.0,483.0 506.1,473.2 499.1,470.3 492.1,464.0 485.2,450.0 478.2,444.2 471.2,432.1 464.3,418.6 457.3,407.3 450.3,393.9 443.4,374.7 436.4,354.8 429.4,331.3 422.4,316.2 415.5,300.6 408.5,286.5 401.5,272.4 394.6,258.5" stroke="#F89A50" stroke-width="1.25" fill="none"/><polyline points="623.7,570.5 616.7,566.3 609.8,562.4 602.8,558.6 595.8,554.7 588.9,549.4 581.9,545.7 574.9,538.0 568.0,531.5 561.0,524.2 554.0,518.1 547.1,514.9 540.1,505.1 533.1,497.0 526.2,492.7 519.2,485.5 512.2,472.8 505.2,467.9 498.3,460.2 491.3,447.5 484.3,442.3 477.4,434.1 470.4,420.6 463.4,408.8 456.5,394.6 449.5,374.4 442.5,353.8 435.6,330.2 428.6,314.1 421.6,298.9 414.7,284.3 407.7,270.6 400.7,257.3" stroke="#F89A50" stroke-width="1.25" fill="none"/><polyline points="629.9,568.9 622.9,563.6 615.9,559.2 609.0,554.4 602.0,550.0 595.0,545.0 588.0,543.4 581.1,538.4 574.1,528.3 567.1,521.0 560.2,513.4 553.2,514.6 546.2,505.0 539.3,498.4 532.3,491.8 525.3,485.5 518.4,474.6 511.4,467.9 504.4,461.5 497.5,449.5 490.5,440.4 483.5,427.5 476.5,418.2 469.6,407.3 462.6,393.9 455.6,373.4 448.7,353.1 441.7,329.1 434.7,312.1 427.8,297.1 420.8,282.6 413.8,269.1 406.9,255.0" stroke="#F89A50" stroke-width="1.25" fill="none"/><polyline points="636.0,567.2 629.0,563.6 622.1,559.3 615.1,553.7 608.1,546.9 601.2,543.6 594.2,541.4 587.2,536.7 580.2,528.7 573.3,523.1 566.3,517.5 559.3,514.1 552.4,507.8 545.4,497.5 538.4,489.2 531.5,481.9 524.5,473.4 517.5,463.0 510.6,456.4 503.6,450.4 496.6,438.2 489.7,426.1 482.7,415.8 475.7,405.4 468.8,391.8 461.8,372.5 454.8,351.5 447.8,327.8 440.9,311.1 433.9,295.7 426.9,280.4 420.0,267.1 413.0,253.2" stroke="#F89A50" stroke-width="1.25" fill="none"/><polyline points="642.1,565.5 635.2,561.3 628.2,557.4 621.2,552.5 614.3,546.5 607.3,544.4 600.3,538.4 593.4,531.8 586.4,526.7 579.4,523.7 572.5,515.9 565.5,510.9 558.5,504.4 551.5,496.3 544.6,486.8 537.6,478.1 530.6,472.6 523.7,464.7 516.7,457.0 509.7,448.1 502.8,439.1 495.8,430.7 488.8,420.5 481.9,406.1 474.9,392.1 467.9,372.3 461.0,350.1 454.0,325.4 447.0,309.0 440.0,294.0 433.1,279.2 426.1,265.9 419.1,251.9" stroke="#F89A50" stroke-width="1.25" fill="none"/><polyline points="648.3,563.9 641.3,559.3 634.3,554.6 627.4,550.1 620.4,544.6 613.4,542.3 606.5,535.9 599.5,530.8 592.5,525.6 585.6,520.5 578.6,516.2 571.6,507.2 564.7,500.4 557.7,494.8 550.7,492.4 543.8,482.6 536.8,475.3 529.8,470.5 522.8,460.0 515.9,450.4 508.9,440.7 501.9,433.3 495.0,420.8 488.0,406.9 481.0,389.8 474.1,369.9 467.1,348.5 460.1,323.9 453.2,307.2 446.2,291.9 439.2,277.3 432.3,264.0 425.3,249.7" stroke="#F89A50" stroke-width="1.25" fill="none"/><polyline points="654.4,562.2 647.5,558.0 640.5,553.3 633.5,548.4 626.6,543.0 619.6,539.5 612.6,533.1 605.6,530.4 598.7,525.9 591.7,518.9 584.7,514.2 577.8,506.1 570.8,495.9 563.8,491.0 556.9,489.8 549.9,482.5 542.9,475.1 536.0,470.7 529.0,461.0 522.0,449.8 515.1,440.7 508.1,429.9 501.1,417.8 494.1,402.9 487.2,387.6 480.2,367.8 473.2,347.4 466.3,322.6 459.3,305.9 452.3,290.5 445.4,275.5 438.4,261.7 431.4,248.1" stroke="#F89A50" stroke-width="1.25" fill="none"/><polyline points="660.6,560.6 653.6,556.2 646.6,552.0 639.7,548.2 632.7,543.3 625.7,539.5 618.8,532.6 611.8,529.8 604.8,526.4 597.9,519.7 590.9,514.1 583.9,508.8 576.9,497.6 570.0,491.1 563.0,485.3 556.0,477.1 549.1,470.4 542.1,465.0 535.1,456.0 528.2,449.8 521.2,440.4 514.2,429.3 507.3,416.1 500.3,400.8 493.3,386.6 486.4,367.2 479.4,347.0 472.4,321.4 465.4,304.4 458.5,289.3 451.5,273.6 444.5,259.8 437.6,246.3" stroke="#F89A50" stroke-width="1.25" fill="none"/><polyline points="666.7,558.9 659.7,554.2 652.8,549.8 645.8,545.5 638.8,541.6 631.9,539.8 624.9,532.4 617.9,528.5 611.0,522.7 604.0,513.0 597.0,507.8 590.1,503.7 583.1,497.3 576.1,489.6 569.2,482.9 562.2,475.0 555.2,470.8 548.2,464.0 541.3,456.6 534.3,448.3 527.3,438.6 520.4,426.9 513.4,414.8 506.4,400.1 499.5,386.6 492.5,365.6 485.5,346.0 478.6,319.6 471.6,302.0 464.6,286.7 457.7,271.8 450.7,258.1 443.7,244.7" stroke="#F89A50" stroke-width="1.25" fill="none"/><polyline points="672.9,557.3 665.9,552.6 658.9,547.0 652.0,541.9 645.0,539.1 638.0,537.9 631.0,532.9 624.1,527.8 617.1,522.3 610.1,511.8 603.2,506.4 596.2,502.4 589.2,497.1 582.3,490.1 575.3,484.9 568.3,477.0 561.4,469.3 554.4,462.2 547.4,452.7 540.5,445.0 533.5,435.4 526.5,425.0 519.5,412.5 512.6,398.4 505.6,385.7 498.6,362.9 491.7,342.9 484.7,317.4 477.7,300.1 470.8,285.0 463.8,269.2 456.8,256.1 449.9,242.8" stroke="#F89A50" stroke-width="1.25" fill="none"/><polyline points="679.0,555.6 672.0,549.9 665.1,545.0 658.1,540.9 651.1,538.6 644.2,537.4 637.2,531.3 630.2,525.2 623.2,518.2 616.3,509.6 609.3,505.8 602.3,499.5 595.4,496.3 588.4,487.9 581.4,483.1 574.5,476.0 567.5,467.9 560.5,461.0 553.6,450.4 546.6,441.4 539.6,432.2 532.7,424.0 525.7,410.8 518.7,397.9 511.8,385.2 504.8,361.7 497.8,341.2 490.8,316.0 483.9,299.7 476.9,284.1 469.9,268.5 463.0,255.2 456.0,241.8" stroke="#F89A50" stroke-width="1.25" fill="none"/><polyline points="685.1,553.9 678.2,549.7 671.2,545.5 664.2,540.8 657.3,538.0 650.3,534.8 643.3,530.2 636.4,522.8 629.4,516.2 622.4,509.1 615.5,503.6 608.5,498.0 601.5,495.4 594.5,489.3 587.6,481.8 580.6,473.4 573.6,466.1 566.7,459.8 559.7,449.8 552.7,443.0 545.8,433.9 538.8,422.7 531.8,408.1 524.9,394.7 517.9,382.7 510.9,360.7 504.0,339.8 497.0,314.1 490.0,297.4 483.0,282.9 476.1,267.4 469.1,254.0 462.1,240.4" stroke="#F89A50" stroke-width="1.25" fill="none"/><polyline points="691.3,552.3 684.3,548.4 677.3,545.1 670.4,540.4 663.4,535.6 656.4,531.1 649.5,527.0 642.5,520.7 635.5,513.9 628.6,508.8 621.6,499.5 614.6,491.9 607.7,489.8 600.7,485.8 593.7,478.9 586.8,469.0 579.8,464.4 572.8,457.1 565.8,448.1 558.9,440.8 551.9,433.3 544.9,422.9 538.0,405.9 531.0,393.0 524.0,380.8 517.1,360.5 510.1,340.2 503.1,313.0 496.2,295.8 489.2,281.1 482.2,265.5 475.3,251.1 468.3,237.7" stroke="#F89A50" stroke-width="1.25" fill="none"/><polyline points="697.4,550.6 690.5,545.9 683.5,542.1 676.5,538.3 669.6,532.2 662.6,526.2 655.6,523.3 648.6,516.0 641.7,508.7 634.7,505.4 627.7,498.7 620.8,493.2 613.8,488.4 606.8,483.0 599.9,477.5 592.9,466.7 585.9,459.4 579.0,454.6 572.0,445.0 565.0,435.3 558.1,427.3 551.1,420.2 544.1,405.9 537.1,394.0 530.2,379.8 523.2,358.4 516.2,337.8 509.3,311.0 502.3,294.2 495.3,279.4 488.4,263.2 481.4,249.4 474.4,236.1" stroke="#F89A50" stroke-width="1.25" fill="none"/><polyline points="703.6,549.0 696.6,544.8 689.6,540.5 682.7,536.5 675.7,530.9 668.7,525.2 661.8,522.5 654.8,515.4 647.8,507.4 640.9,502.6 633.9,498.9 626.9,497.6 619.9,490.3 613.0,481.4 606.0,478.2 599.0,470.5 592.1,460.8 585.1,451.9 578.1,445.3 571.2,435.9 564.2,424.5 557.2,414.8 550.3,402.0 543.3,392.2 536.3,379.1 529.4,358.2 522.4,335.9 515.4,308.8 508.4,291.8 501.5,276.7 494.5,261.3 487.5,248.4 480.6,235.0" stroke="#F89A50" stroke-width="1.25" fill="none"/><polyline points="709.7,547.3 702.7,543.4 695.8,538.0 688.8,533.6 681.8,529.7 674.9,525.8 667.9,520.6 660.9,514.7 654.0,511.0 647.0,505.1 640.0,497.7 633.1,495.1 626.1,489.4 619.1,480.5 612.2,478.4 605.2,471.6 598.2,459.2 591.2,450.4 584.3,443.4 577.3,436.7 570.3,422.9 563.4,413.7 556.4,402.7 549.4,390.1 542.5,375.7 535.5,356.0 528.5,335.1 521.6,307.4 514.6,290.3 507.6,275.3 500.7,259.9 493.7,246.9 486.7,233.7" stroke="#F89A50" stroke-width="1.25" fill="none"/><polyline points="715.9,545.7 708.9,540.9 701.9,536.0 695.0,532.2 688.0,530.0 681.0,526.8 674.0,519.8 667.1,511.9 660.1,508.6 653.1,502.2 646.2,495.5 639.2,493.2 632.2,483.8 625.3,478.2 618.3,472.1 611.3,466.1 604.4,458.6 597.4,449.3 590.4,442.4 583.5,433.4 576.5,422.4 569.5,412.8 562.5,403.0 555.6,387.4 548.6,371.5 541.6,353.3 534.7,332.2 527.7,305.0 520.7,288.7 513.8,274.4 506.8,259.1 499.8,245.1 492.9,232.4" stroke="#F89A50" stroke-width="1.25" fill="none"/><polyline points="722.0,544.0 715.0,539.6 708.1,535.1 701.1,530.8 694.1,526.6 687.2,522.4 680.2,517.3 673.2,511.3 666.2,505.3 659.3,499.3 652.3,493.5 645.3,487.8 638.4,482.2 631.4,476.5 624.4,470.9 617.5,463.9 610.5,456.4 603.5,448.8 596.6,441.0 589.6,431.8 582.6,422.1 575.7,411.7 568.7,401.0 561.7,386.1 554.8,371.2 547.8,351.8 540.8,330.8 533.8,304.6 526.9,287.5 519.9,272.4 512.9,257.3 506.0,243.4 499.0,230.0" stroke="#F89A50" stroke-width="1.25" fill="none"/><polyline points="507.0,603.0 500.0,601.1 493.1,599.2 486.1,597.2 479.1,594.3 472.2,589.9 465.2,585.5 458.2,581.2 451.2,575.4 444.3,568.9 437.3,562.4 430.3,555.9 423.4,548.6 416.4,541.1 409.4,533.6 402.5,526.2 395.5,518.7 388.5,511.2 381.6,503.7 374.6,497.1 367.6,490.7 360.7,484.3 353.7,477.6 346.7,470.6 339.8,463.6 332.8,455.1 325.8,445.6 318.8,436.9 311.9,429.3 304.9,420.8 297.9,411.5 291.0,401.8 284.0,392.0" stroke="#6AB23A" stroke-width="1.25" fill="none"/><polyline points="507.0,603.0 513.1,601.3 519.3,599.7 525.4,598.0 531.6,596.4 537.7,594.7 543.9,592.8 550.0,590.9 556.1,589.1 562.3,587.2 568.4,585.4 574.6,583.8 580.7,582.1 586.9,580.5 593.0,578.8 599.1,577.1 605.3,575.5 611.4,573.8 617.6,572.2 623.7,570.5 629.9,568.9 636.0,567.2 642.1,565.5 648.3,563.9 654.4,562.2 660.6,560.6 666.7,558.9 672.9,557.3 679.0,555.6 685.1,553.9 691.3,552.3 697.4,550.6 703.6,549.0 709.7,547.3 715.9,545.7 722.0,544.0" stroke="#F2E81A" stroke-width="1.25" fill="none"/><polyline points="648.3,563.9 641.3,559.3 634.3,554.6 627.4,550.1 620.4,544.6 613.4,542.3 606.5,535.9 599.5,530.8 592.5,525.6 585.6,520.5 578.6,516.2 571.6,507.2 564.7,500.4 557.7,494.8 550.7,492.4 543.8,482.6 536.8,475.3 529.8,470.5 522.8,460.0 515.9,450.4 508.9,440.7 501.9,433.3 495.0,420.8 488.0,406.9 481.0,389.8 474.1,369.9 467.1,348.5 460.1,323.9 453.2,307.2 446.2,291.9 439.2,277.3 432.3,264.0 425.3,249.7" stroke="#3A52A8" stroke-width="1.3" fill="none"/><polyline points="297.9,411.5 304.1,410.5 310.2,408.6 316.4,406.1 322.5,404.6 328.7,403.2 334.8,381.5 340.9,353.3 347.1,333.6 353.2,308.1 359.4,299.6 365.5,298.6 371.7,295.9 377.8,294.1 383.9,292.3 390.1,290.9 396.2,289.4 402.4,288.1 408.5,286.5 414.7,284.3 420.8,282.6 426.9,280.4 433.1,279.2 439.2,277.3 445.4,275.5 451.5,273.6 457.7,271.8 463.8,269.2 469.9,268.5 476.1,267.4 482.2,265.5 488.4,263.2 494.5,261.3 500.7,259.9 506.8,259.1 512.9,257.3" stroke="#3A52A8" stroke-width="1.3" fill="none"/></svg>
<div class="a t" style="left:329px;top:635px;font:24px 'Liberation Sans';color:#fff;-webkit-text-stroke:0.6px #fff;letter-spacing:0.3px">load</div>
<div class="a t" style="left:550px;top:648px;font:24px 'Liberation Sans';color:#fff;-webkit-text-stroke:0.6px #fff;letter-spacing:0.3px">rpm</div>
<svg class="a" style="left:211px;top:210px" width="600" height="468"><g stroke="#fff" stroke-width="1.3" fill="none">
<path d="M114 436 L82 422 M82 422 L91 417 M82 422 L88 428"/><path d="M384 449 L419 444 M419 444 L410 439 M419 444 L412 450"/></g></svg>
<div class="a" style="left:1470px;top:95px;width:215px;height:110px;background:#3E4A5A"></div>
<div class="btn sv" style="left:1471px;top:96px;width:106px;height:21px;font-size:17px;line-height:19px;letter-spacing:0.2px;font-weight:bold">Rpm hold</div>
<div class="btn sv" style="left:1578px;top:96px;width:106px;height:21px;font-size:17px;line-height:19px;letter-spacing:0.2px;font-weight:normal">Rpm track</div>
<div class="btn sv" style="left:1471px;top:117px;width:31px;height:21px;font-size:17px;line-height:19px;letter-spacing:0.2px;font-weight:normal">-</div>
<div class="btn sv" style="left:1652px;top:117px;width:32px;height:21px;font-size:17px;line-height:19px;letter-spacing:0.2px;font-weight:normal">+</div>
<div class="a t" style="left:1503px;top:118px;width:149px;height:20px;background:#7C1417;color:#6CC9E0;font:italic 20px 'Liberation Sans';text-align:center;line-height:22px">5000 rpm</div>
<div class="btn sv" style="left:1471px;top:139px;width:106px;height:21px;font-size:17px;line-height:19px;letter-spacing:0.2px;font-weight:bold">Load hold</div>
<div class="btn sv" style="left:1578px;top:139px;width:106px;height:21px;font-size:17px;line-height:19px;letter-spacing:0.2px;font-weight:normal">Load track</div>
<div class="btn sv" style="left:1471px;top:160px;width:106px;height:22px;font-size:17px;line-height:19px;letter-spacing:0.2px;font-weight:normal">Load center</div>
<div class="btn sv" style="left:1578px;top:160px;width:106px;height:22px;font-size:17px;line-height:19px;letter-spacing:0.2px;font-weight:bold">Arrow center</div>
<div class="btn sv" style="left:1471px;top:182px;width:106px;height:22px;font-size:17px;line-height:19px;letter-spacing:0.2px;font-weight:bold">Roam map</div>
<div class="btn sv" style="left:1578px;top:182px;width:106px;height:22px;font-size:17px;line-height:19px;letter-spacing:0.2px;font-weight:normal">Roam grid</div>
<div class="a" style="left:827px;top:210px;width:873px;height:469px;background:#fff;border-top:1px solid #808080;border-left:1px solid #808080;overflow:hidden"><div class="a" style="left:0;top:0;width:855px;height:446px;overflow:hidden"><div class="a" style="left:0;top:0;width:80px;height:28px;background:#D4D0C8;border-top:1px solid #fff;border-left:1px solid #fff;border-right:1px solid #808080;border-bottom:1px solid #808080"></div><div class="a t" style="left:80px;top:0;width:80px;height:28px;background:#D4D0C8;border-top:1px solid #fff;border-left:1px solid #fff;border-right:1px solid #808080;border-bottom:1px solid #808080;font-size:14px;line-height:24px;padding-left:5px"><span class="ty">120 mmHg</span></div><div class="a t" style="left:160px;top:0;width:80px;height:28px;background:#D4D0C8;border-top:1px solid #fff;border-left:1px solid #fff;border-right:1px solid #808080;border-bottom:1px solid #808080;font-size:14px;line-height:24px;padding-left:5px"><span class="ty">90 mmHg</span></div><div class="a t" style="left:240px;top:0;width:80px;height:28px;background:#D4D0C8;border-top:1px solid #fff;border-left:1px solid #fff;border-right:1px solid #808080;border-bottom:1px solid #808080;font-size:14px;line-height:24px;padding-left:5px"><span class="ty">60 mmHg</span></div><div class="a t" style="left:320px;top:0;width:80px;height:28px;background:#D4D0C8;border-top:1px solid #fff;border-left:1px solid #fff;border-right:1px solid #808080;border-bottom:1px solid #808080;font-size:14px;line-height:24px;padding-left:5px"><span class="ty">30 mmHg</span></div><div class="a t" style="left:400px;top:0;width:80px;height:28px;background:#D4D0C8;border-top:1px solid #fff;border-left:1px solid #fff;border-right:1px solid #808080;border-bottom:1px solid #808080;font-size:14px;line-height:24px;padding-left:5px"><span class="ty">0 mmHg</span></div><div class="a t" style="left:480px;top:0;width:80px;height:28px;background:#D4D0C8;border-top:1px solid #fff;border-left:1px solid #fff;border-right:1px solid #808080;border-bottom:1px solid #808080;font-size:14px;line-height:24px;padding-left:5px"><span class="ty">2.0 psi</span></div><div class="a t" style="left:560px;top:0;width:80px;height:28px;background:#D4D0C8;border-top:1px solid #fff;border-left:1px solid #fff;border-right:1px solid #808080;border-bottom:1px solid #808080;font-size:14px;line-height:24px;padding-left:5px"><span class="ty">4.0 psi</span></div><div class="a t" style="left:640px;top:0;width:80px;height:28px;background:#D4D0C8;border-top:1px solid #fff;border-left:1px solid #fff;border-right:1px solid #808080;border-bottom:1px solid #808080;font-size:14px;line-height:24px;padding-left:5px"><span class="ty">6.0 psi</span></div><div class="a t" style="left:720px;top:0;width:80px;height:28px;background:#D4D0C8;border-top:1px solid #fff;border-left:1px solid #fff;border-right:1px solid #808080;border-bottom:1px solid #808080;font-size:14px;line-height:24px;padding-left:5px"><span class="ty">8.0 psi</span></div><div class="a t" style="left:800px;top:0;width:80px;height:28px;background:#D4D0C8;border-top:1px solid #fff;border-left:1px solid #fff;border-right:1px solid #808080;border-bottom:1px solid #808080;font-size:14px;line-height:24px;padding-left:5px"><span class="ty">10.0 psi</span></div><div class="a t" style="left:0;top:28.00px;width:80px;height:26.6px;background:#D4D0C8;border-top:1px solid #fff;border-left:1px solid #fff;border-right:1px solid #808080;border-bottom:1px solid #808080;font-size:14px;line-height:23px;padding-left:6px"><span class="ty">1500 rpm</span></div><div class="a" style="left:80px;top:28.00px;width:800px;height:26.6px;background:#FFFFFF"></div><div class="a t" style="left:80px;top:28.00px;width:80px;height:26.6px;border-right:1px solid #C8C8C8;border-bottom:1px solid #C8C8C8;font-size:14px;line-height:26px;padding-left:7px"><span class="ty">12.6</span></div><div class="a t" style="left:160px;top:28.00px;width:80px;height:26.6px;border-right:1px solid #C8C8C8;border-bottom:1px solid #C8C8C8;font-size:14px;line-height:26px;padding-left:7px"><span class="ty">13.3</span></div><div class="a t" style="left:240px;top:28.00px;width:80px;height:26.6px;border-right:1px solid #C8C8C8;border-bottom:1px solid #C8C8C8;font-size:14px;line-height:26px;padding-left:7px"><span class="ty">14.3</span></div><div class="a t" style="left:320px;top:28.00px;width:80px;height:26.6px;border-right:1px solid #C8C8C8;border-bottom:1px solid #C8C8C8;font-size:14px;line-height:26px;padding-left:7px"><span class="ty">15.2</span></div><div class="a t" style="left:400px;top:28.00px;width:80px;height:26.6px;border-right:1px solid #C8C8C8;border-bottom:1px solid #C8C8C8;font-size:14px;line-height:26px;padding-left:7px"><span class="ty">16.3</span></div><div class="a t" style="left:480px;top:28.00px;width:80px;height:26.6px;border-right:1px solid #C8C8C8;border-bottom:1px solid #C8C8C8;font-size:14px;line-height:26px;padding-left:7px"><span class="ty">18.65</span></div><div class="a t" style="left:560px;top:28.00px;width:80px;height:26.6px;border-right:1px solid #C8C8C8;border-bottom:1px solid #C8C8C8;font-size:14px;line-height:26px;padding-left:7px"><span class="ty">20.7</span></div><div class="a t" style="left:640px;top:28.00px;width:80px;height:26.6px;border-right:1px solid #C8C8C8;border-bottom:1px solid #C8C8C8;font-size:14px;line-height:26px;padding-left:7px"><span class="ty">22</span></div><div class="a t" style="left:720px;top:28.00px;width:80px;height:26.6px;border-right:1px solid #C8C8C8;border-bottom:1px solid #C8C8C8;font-size:14px;line-height:26px;padding-left:7px"><span class="ty">23</span></div><div class="a t" style="left:800px;top:28.00px;width:80px;height:26.6px;border-right:1px solid #C8C8C8;border-bottom:1px solid #C8C8C8;font-size:14px;line-height:26px;padding-left:7px"><span class="ty">24</span></div><div class="a t" style="left:0;top:54.57px;width:80px;height:26.6px;background:#D4D0C8;border-top:1px solid #fff;border-left:1px solid #fff;border-right:1px solid #808080;border-bottom:1px solid #808080;font-size:14px;line-height:23px;padding-left:6px"><span class="ty">1750 rpm</span></div><div class="a" style="left:80px;top:54.57px;width:800px;height:26.6px;background:#EFEFF8"></div><div class="a t" style="left:80px;top:54.57px;width:80px;height:26.6px;border-right:1px solid #C8C8C8;border-bottom:1px solid #C8C8C8;font-size:14px;line-height:26px;padding-left:7px"><span class="ty">12.8</span></div><div class="a t" style="left:160px;top:54.57px;width:80px;height:26.6px;border-right:1px solid #C8C8C8;border-bottom:1px solid #C8C8C8;font-size:14px;line-height:26px;padding-left:7px"><span class="ty">13.15</span></div><div class="a t" style="left:240px;top:54.57px;width:80px;height:26.6px;border-right:1px solid #C8C8C8;border-bottom:1px solid #C8C8C8;font-size:14px;line-height:26px;padding-left:7px"><span class="ty">14.35</span></div><div class="a t" style="left:320px;top:54.57px;width:80px;height:26.6px;border-right:1px solid #C8C8C8;border-bottom:1px solid #C8C8C8;font-size:14px;line-height:26px;padding-left:7px"><span class="ty">15.25</span></div><div class="a t" style="left:400px;top:54.57px;width:80px;height:26.6px;border-right:1px solid #C8C8C8;border-bottom:1px solid #C8C8C8;font-size:14px;line-height:26px;padding-left:7px"><span class="ty">15.65</span></div><div class="a t" style="left:480px;top:54.57px;width:80px;height:26.6px;border-right:1px solid #C8C8C8;border-bottom:1px solid #C8C8C8;font-size:14px;line-height:26px;padding-left:7px"><span class="ty">20.6</span></div><div class="a t" style="left:560px;top:54.57px;width:80px;height:26.6px;border-right:1px solid #C8C8C8;border-bottom:1px solid #C8C8C8;font-size:14px;line-height:26px;padding-left:7px"><span class="ty">22</span></div><div class="a t" style="left:640px;top:54.57px;width:80px;height:26.6px;border-right:1px solid #C8C8C8;border-bottom:1px solid #C8C8C8;font-size:14px;line-height:26px;padding-left:7px"><span class="ty">23</span></div><div class="a t" style="left:720px;top:54.57px;width:80px;height:26.6px;border-right:1px solid #C8C8C8;border-bottom:1px solid #C8C8C8;font-size:14px;line-height:26px;padding-left:7px"><span class="ty">25</span></div><div class="a t" style="left:800px;top:54.57px;width:80px;height:26.6px;border-right:1px solid #C8C8C8;border-bottom:1px solid #C8C8C8;font-size:14px;line-height:26px;padding-left:7px"><span class="ty">27</span></div><div class="a t" style="left:0;top:81.14px;width:80px;height:26.6px;background:#D4D0C8;border-top:1px solid #fff;border-left:1px solid #fff;border-right:1px solid #808080;border-bottom:1px solid #808080;font-size:14px;line-height:23px;padding-left:6px"><span class="ty">2000 rpm</span></div><div class="a" style="left:80px;top:81.14px;width:800px;height:26.6px;background:#FFFFFF"></div><div class="a t" style="left:80px;top:81.14px;width:80px;height:26.6px;border-right:1px solid #C8C8C8;border-bottom:1px solid #C8C8C8;font-size:14px;line-height:26px;padding-left:7px"><span class="ty">12.8</span></div><div class="a t" style="left:160px;top:81.14px;width:80px;height:26.6px;border-right:1px solid #C8C8C8;border-bottom:1px solid #C8C8C8;font-size:14px;line-height:26px;padding-left:7px"><span class="ty">13.7</span></div><div class="a t" style="left:240px;top:81.14px;width:80px;height:26.6px;border-right:1px solid #C8C8C8;border-bottom:1px solid #C8C8C8;font-size:14px;line-height:26px;padding-left:7px"><span class="ty">14.55</span></div><div class="a t" style="left:320px;top:81.14px;width:80px;height:26.6px;border-right:1px solid #C8C8C8;border-bottom:1px solid #C8C8C8;font-size:14px;line-height:26px;padding-left:7px"><span class="ty">15.8</span></div><div class="a t" style="left:400px;top:81.14px;width:80px;height:26.6px;border-right:1px solid #C8C8C8;border-bottom:1px solid #C8C8C8;font-size:14px;line-height:26px;padding-left:7px"><span class="ty">16.65</span></div><div class="a t" style="left:480px;top:81.14px;width:80px;height:26.6px;border-right:1px solid #C8C8C8;border-bottom:1px solid #C8C8C8;font-size:14px;line-height:26px;padding-left:7px"><span class="ty">17.8</span></div><div class="a t" style="left:560px;top:81.14px;width:80px;height:26.6px;border-right:1px solid #C8C8C8;border-bottom:1px solid #C8C8C8;font-size:14px;line-height:26px;padding-left:7px"><span class="ty">19.3</span></div><div class="a t" style="left:640px;top:81.14px;width:80px;height:26.6px;border-right:1px solid #C8C8C8;border-bottom:1px solid #C8C8C8;font-size:14px;line-height:26px;padding-left:7px"><span class="ty">21.45</span></div><div class="a t" style="left:720px;top:81.14px;width:80px;height:26.6px;border-right:1px solid #C8C8C8;border-bottom:1px solid #C8C8C8;font-size:14px;line-height:26px;padding-left:7px"><span class="ty">24</span></div><div class="a t" style="left:800px;top:81.14px;width:80px;height:26.6px;border-right:1px solid #C8C8C8;border-bottom:1px solid #C8C8C8;font-size:14px;line-height:26px;padding-left:7px"><span class="ty">29</span></div><div class="a t" style="left:0;top:107.71px;width:80px;height:26.6px;background:#D4D0C8;border-top:1px solid #fff;border-left:1px solid #fff;border-right:1px solid #808080;border-bottom:1px solid #808080;font-size:14px;line-height:23px;padding-left:6px"><span class="ty">2250 rpm</span></div><div class="a" style="left:80px;top:107.71px;width:800px;height:26.6px;background:#EFEFF8"></div><div class="a t" style="left:80px;top:107.71px;width:80px;height:26.6px;border-right:1px solid #C8C8C8;border-bottom:1px solid #C8C8C8;font-size:14px;line-height:26px;padding-left:7px"><span class="ty">12.8</span></div><div class="a t" style="left:160px;top:107.71px;width:80px;height:26.6px;border-right:1px solid #C8C8C8;border-bottom:1px solid #C8C8C8;font-size:14px;line-height:26px;padding-left:7px"><span class="ty">13.7</span></div><div class="a t" style="left:240px;top:107.71px;width:80px;height:26.6px;border-right:1px solid #C8C8C8;border-bottom:1px solid #C8C8C8;font-size:14px;line-height:26px;padding-left:7px"><span class="ty">14.55</span></div><div class="a t" style="left:320px;top:107.71px;width:80px;height:26.6px;border-right:1px solid #C8C8C8;border-bottom:1px solid #C8C8C8;font-size:14px;line-height:26px;padding-left:7px"><span class="ty">15.95</span></div><div class="a t" style="left:400px;top:107.71px;width:80px;height:26.6px;border-right:1px solid #C8C8C8;border-bottom:1px solid #C8C8C8;font-size:14px;line-height:26px;padding-left:7px"><span class="ty">17.55</span></div><div class="a t" style="left:480px;top:107.71px;width:80px;height:26.6px;border-right:1px solid #C8C8C8;border-bottom:1px solid #C8C8C8;font-size:14px;line-height:26px;padding-left:7px"><span class="ty">19.8</span></div><div class="a t" style="left:560px;top:107.71px;width:80px;height:26.6px;border-right:1px solid #C8C8C8;border-bottom:1px solid #C8C8C8;font-size:14px;line-height:26px;padding-left:7px"><span class="ty">22.15</span></div><div class="a t" style="left:640px;top:107.71px;width:80px;height:26.6px;border-right:1px solid #C8C8C8;border-bottom:1px solid #C8C8C8;font-size:14px;line-height:26px;padding-left:7px"><span class="ty">26</span></div><div class="a t" style="left:720px;top:107.71px;width:80px;height:26.6px;border-right:1px solid #C8C8C8;border-bottom:1px solid #C8C8C8;font-size:14px;line-height:26px;padding-left:7px"><span class="ty">29</span></div><div class="a t" style="left:800px;top:107.71px;width:80px;height:26.6px;border-right:1px solid #C8C8C8;border-bottom:1px solid #C8C8C8;font-size:14px;line-height:26px;padding-left:7px"><span class="ty">29.6</span></div><div class="a t" style="left:0;top:134.28px;width:80px;height:26.6px;background:#D4D0C8;border-top:1px solid #fff;border-left:1px solid #fff;border-right:1px solid #808080;border-bottom:1px solid #808080;font-size:14px;line-height:23px;padding-left:6px"><span class="ty">2500 rpm</span></div><div class="a" style="left:80px;top:134.28px;width:800px;height:26.6px;background:#FFFFFF"></div><div class="a t" style="left:80px;top:134.28px;width:80px;height:26.6px;border-right:1px solid #C8C8C8;border-bottom:1px solid #C8C8C8;font-size:14px;line-height:26px;padding-left:7px"><span class="ty">12.8</span></div><div class="a t" style="left:160px;top:134.28px;width:80px;height:26.6px;border-right:1px solid #C8C8C8;border-bottom:1px solid #C8C8C8;font-size:14px;line-height:26px;padding-left:7px"><span class="ty">13.7</span></div><div class="a t" style="left:240px;top:134.28px;width:80px;height:26.6px;border-right:1px solid #C8C8C8;border-bottom:1px solid #C8C8C8;font-size:14px;line-height:26px;padding-left:7px"><span class="ty">14.55</span></div><div class="a t" style="left:320px;top:134.28px;width:80px;height:26.6px;border-right:1px solid #C8C8C8;border-bottom:1px solid #C8C8C8;font-size:14px;line-height:26px;padding-left:7px"><span class="ty">16.45</span></div><div class="a t" style="left:400px;top:134.28px;width:80px;height:26.6px;border-right:1px solid #C8C8C8;border-bottom:1px solid #C8C8C8;font-size:14px;line-height:26px;padding-left:7px"><span class="ty">18.15</span></div><div class="a t" style="left:480px;top:134.28px;width:80px;height:26.6px;border-right:1px solid #C8C8C8;border-bottom:1px solid #C8C8C8;font-size:14px;line-height:26px;padding-left:7px"><span class="ty">20.55</span></div><div class="a t" style="left:560px;top:134.28px;width:80px;height:26.6px;border-right:1px solid #C8C8C8;border-bottom:1px solid #C8C8C8;font-size:14px;line-height:26px;padding-left:7px"><span class="ty">23.05</span></div><div class="a t" style="left:640px;top:134.28px;width:80px;height:26.6px;border-right:1px solid #C8C8C8;border-bottom:1px solid #C8C8C8;font-size:14px;line-height:26px;padding-left:7px"><span class="ty">26.65</span></div><div class="a t" style="left:720px;top:134.28px;width:80px;height:26.6px;border-right:1px solid #C8C8C8;border-bottom:1px solid #C8C8C8;font-size:14px;line-height:26px;padding-left:7px"><span class="ty">29</span></div><div class="a t" style="left:800px;top:134.28px;width:80px;height:26.6px;border-right:1px solid #C8C8C8;border-bottom:1px solid #C8C8C8;font-size:14px;line-height:26px;padding-left:7px"><span class="ty">29.6</span></div><div class="a t" style="left:0;top:160.85px;width:80px;height:26.6px;background:#D4D0C8;border-top:1px solid #fff;border-left:1px solid #fff;border-right:1px solid #808080;border-bottom:1px solid #808080;font-size:14px;line-height:23px;padding-left:6px"><span class="ty">2750 rpm</span></div><div class="a" style="left:80px;top:160.85px;width:800px;height:26.6px;background:#EFEFF8"></div><div class="a t" style="left:80px;top:160.85px;width:80px;height:26.6px;border-right:1px solid #C8C8C8;border-bottom:1px solid #C8C8C8;font-size:14px;line-height:26px;padding-left:7px"><span class="ty">12.8</span></div><div class="a t" style="left:160px;top:160.85px;width:80px;height:26.6px;border-right:1px solid #C8C8C8;border-bottom:1px solid #C8C8C8;font-size:14px;line-height:26px;padding-left:7px"><span class="ty">13.7</span></div><div class="a t" style="left:240px;top:160.85px;width:80px;height:26.6px;border-right:1px solid #C8C8C8;border-bottom:1px solid #C8C8C8;font-size:14px;line-height:26px;padding-left:7px"><span class="ty">14.55</span></div><div class="a t" style="left:320px;top:160.85px;width:80px;height:26.6px;border-right:1px solid #C8C8C8;border-bottom:1px solid #C8C8C8;font-size:14px;line-height:26px;padding-left:7px"><span class="ty">17.1</span></div><div class="a t" style="left:400px;top:160.85px;width:80px;height:26.6px;border-right:1px solid #C8C8C8;border-bottom:1px solid #C8C8C8;font-size:14px;line-height:26px;padding-left:7px"><span class="ty">19</span></div><div class="a t" style="left:480px;top:160.85px;width:80px;height:26.6px;border-right:1px solid #C8C8C8;border-bottom:1px solid #C8C8C8;font-size:14px;line-height:26px;padding-left:7px"><span class="ty">22.15</span></div><div class="a t" style="left:560px;top:160.85px;width:80px;height:26.6px;border-right:1px solid #C8C8C8;border-bottom:1px solid #C8C8C8;font-size:14px;line-height:26px;padding-left:7px"><span class="ty">25.35</span></div><div class="a t" style="left:640px;top:160.85px;width:80px;height:26.6px;border-right:1px solid #C8C8C8;border-bottom:1px solid #C8C8C8;font-size:14px;line-height:26px;padding-left:7px"><span class="ty">27</span></div><div class="a t" style="left:720px;top:160.85px;width:80px;height:26.6px;border-right:1px solid #C8C8C8;border-bottom:1px solid #C8C8C8;font-size:14px;line-height:26px;padding-left:7px"><span class="ty">29</span></div><div class="a t" style="left:800px;top:160.85px;width:80px;height:26.6px;border-right:1px solid #C8C8C8;border-bottom:1px solid #C8C8C8;font-size:14px;line-height:26px;padding-left:7px"><span class="ty">29.6</span></div><div class="a t" style="left:0;top:187.42px;width:80px;height:26.6px;background:#D4D0C8;border-top:1px solid #fff;border-left:1px solid #fff;border-right:1px solid #808080;border-bottom:1px solid #808080;font-size:14px;line-height:23px;padding-left:6px"><span class="ty">3000 rpm</span></div><div class="a" style="left:80px;top:187.42px;width:800px;height:26.6px;background:#FFFFFF"></div><div class="a t" style="left:80px;top:187.42px;width:80px;height:26.6px;border-right:1px solid #C8C8C8;border-bottom:1px solid #C8C8C8;font-size:14px;line-height:26px;padding-left:7px"><span class="ty">13.05</span></div><div class="a t" style="left:160px;top:187.42px;width:80px;height:26.6px;border-right:1px solid #C8C8C8;border-bottom:1px solid #C8C8C8;font-size:14px;line-height:26px;padding-left:7px"><span class="ty">14.3</span></div><div class="a t" style="left:240px;top:187.42px;width:80px;height:26.6px;border-right:1px solid #C8C8C8;border-bottom:1px solid #C8C8C8;font-size:14px;line-height:26px;padding-left:7px"><span class="ty">15.85</span></div><div class="a t" style="left:320px;top:187.42px;width:80px;height:26.6px;border-right:1px solid #C8C8C8;border-bottom:1px solid #C8C8C8;font-size:14px;line-height:26px;padding-left:7px"><span class="ty">18</span></div><div class="a t" style="left:400px;top:187.42px;width:80px;height:26.6px;border-right:1px solid #C8C8C8;border-bottom:1px solid #C8C8C8;font-size:14px;line-height:26px;padding-left:7px"><span class="ty">19.9</span></div><div class="a t" style="left:480px;top:187.42px;width:80px;height:26.6px;border-right:1px solid #C8C8C8;border-bottom:1px solid #C8C8C8;font-size:14px;line-height:26px;padding-left:7px"><span class="ty">22.35</span></div><div class="a t" style="left:560px;top:187.42px;width:80px;height:26.6px;border-right:1px solid #C8C8C8;border-bottom:1px solid #C8C8C8;font-size:14px;line-height:26px;padding-left:7px"><span class="ty">25.75</span></div><div class="a t" style="left:640px;top:187.42px;width:80px;height:26.6px;border-right:1px solid #C8C8C8;border-bottom:1px solid #C8C8C8;font-size:14px;line-height:26px;padding-left:7px"><span class="ty">27</span></div><div class="a t" style="left:720px;top:187.42px;width:80px;height:26.6px;border-right:1px solid #C8C8C8;border-bottom:1px solid #C8C8C8;font-size:14px;line-height:26px;padding-left:7px"><span class="ty">29</span></div><div class="a t" style="left:800px;top:187.42px;width:80px;height:26.6px;border-right:1px solid #C8C8C8;border-bottom:1px solid #C8C8C8;font-size:14px;line-height:26px;padding-left:7px"><span class="ty">29.6</span></div><div class="a t" style="left:0;top:213.99px;width:80px;height:26.6px;background:#D4D0C8;border-top:1px solid #fff;border-left:1px solid #fff;border-right:1px solid #808080;border-bottom:1px solid #808080;font-size:14px;line-height:23px;padding-left:6px"><span class="ty">3250 rpm</span></div><div class="a" style="left:80px;top:213.99px;width:800px;height:26.6px;background:#EFEFF8"></div><div class="a t" style="left:80px;top:213.99px;width:80px;height:26.6px;border-right:1px solid #C8C8C8;border-bottom:1px solid #C8C8C8;font-size:14px;line-height:26px;padding-left:7px"><span class="ty">13.05</span></div><div class="a t" style="left:160px;top:213.99px;width:80px;height:26.6px;border-right:1px solid #C8C8C8;border-bottom:1px solid #C8C8C8;font-size:14px;line-height:26px;padding-left:7px"><span class="ty">14.2</span></div><div class="a t" style="left:240px;top:213.99px;width:80px;height:26.6px;border-right:1px solid #C8C8C8;border-bottom:1px solid #C8C8C8;font-size:14px;line-height:26px;padding-left:7px"><span class="ty">15.8</span></div><div class="a t" style="left:320px;top:213.99px;width:80px;height:26.6px;border-right:1px solid #C8C8C8;border-bottom:1px solid #C8C8C8;font-size:14px;line-height:26px;padding-left:7px"><span class="ty">17.9</span></div><div class="a t" style="left:400px;top:213.99px;width:80px;height:26.6px;border-right:1px solid #C8C8C8;border-bottom:1px solid #C8C8C8;font-size:14px;line-height:26px;padding-left:7px"><span class="ty">19.9</span></div><div class="a t" style="left:480px;top:213.99px;width:80px;height:26.6px;border-right:1px solid #C8C8C8;border-bottom:1px solid #C8C8C8;font-size:14px;line-height:26px;padding-left:7px"><span class="ty">22.85</span></div><div class="a t" style="left:560px;top:213.99px;width:80px;height:26.6px;border-right:1px solid #C8C8C8;border-bottom:1px solid #C8C8C8;font-size:14px;line-height:26px;padding-left:7px"><span class="ty">25.5</span></div><div class="a t" style="left:640px;top:213.99px;width:80px;height:26.6px;border-right:1px solid #C8C8C8;border-bottom:1px solid #C8C8C8;font-size:14px;line-height:26px;padding-left:7px"><span class="ty">27</span></div><div class="a t" style="left:720px;top:213.99px;width:80px;height:26.6px;border-right:1px solid #C8C8C8;border-bottom:1px solid #C8C8C8;font-size:14px;line-height:26px;padding-left:7px"><span class="ty">29</span></div><div class="a t" style="left:800px;top:213.99px;width:80px;height:26.6px;border-right:1px solid #C8C8C8;border-bottom:1px solid #C8C8C8;font-size:14px;line-height:26px;padding-left:7px"><span class="ty">29.6</span></div><div class="a t" style="left:0;top:240.56px;width:80px;height:26.6px;background:#D4D0C8;border-top:1px solid #fff;border-left:1px solid #fff;border-right:1px solid #808080;border-bottom:1px solid #808080;font-size:14px;line-height:23px;padding-left:6px"><span class="ty">3500 rpm</span></div><div class="a" style="left:80px;top:240.56px;width:800px;height:26.6px;background:#FFFFFF"></div><div class="a t" style="left:80px;top:240.56px;width:80px;height:26.6px;border-right:1px solid #C8C8C8;border-bottom:1px solid #C8C8C8;font-size:14px;line-height:26px;padding-left:7px"><span class="ty">13.1</span></div><div class="a t" style="left:160px;top:240.56px;width:80px;height:26.6px;border-right:1px solid #C8C8C8;border-bottom:1px solid #C8C8C8;font-size:14px;line-height:26px;padding-left:7px"><span class="ty">14.5</span></div><div class="a t" style="left:240px;top:240.56px;width:80px;height:26.6px;border-right:1px solid #C8C8C8;border-bottom:1px solid #C8C8C8;font-size:14px;line-height:26px;padding-left:7px"><span class="ty">16.15</span></div><div class="a t" style="left:320px;top:240.56px;width:80px;height:26.6px;border-right:1px solid #C8C8C8;border-bottom:1px solid #C8C8C8;font-size:14px;line-height:26px;padding-left:7px"><span class="ty">18</span></div><div class="a t" style="left:400px;top:240.56px;width:80px;height:26.6px;border-right:1px solid #C8C8C8;border-bottom:1px solid #C8C8C8;font-size:14px;line-height:26px;padding-left:7px"><span class="ty">20</span></div><div class="a t" style="left:480px;top:240.56px;width:80px;height:26.6px;border-right:1px solid #C8C8C8;border-bottom:1px solid #C8C8C8;font-size:14px;line-height:26px;padding-left:7px"><span class="ty">22.85</span></div><div class="a t" style="left:560px;top:240.56px;width:80px;height:26.6px;border-right:1px solid #C8C8C8;border-bottom:1px solid #C8C8C8;font-size:14px;line-height:26px;padding-left:7px"><span class="ty">25.7</span></div><div class="a t" style="left:640px;top:240.56px;width:80px;height:26.6px;border-right:1px solid #C8C8C8;border-bottom:1px solid #C8C8C8;font-size:14px;line-height:26px;padding-left:7px"><span class="ty">28.1</span></div><div class="a t" style="left:720px;top:240.56px;width:80px;height:26.6px;border-right:1px solid #C8C8C8;border-bottom:1px solid #C8C8C8;font-size:14px;line-height:26px;padding-left:7px"><span class="ty">29</span></div><div class="a t" style="left:800px;top:240.56px;width:80px;height:26.6px;border-right:1px solid #C8C8C8;border-bottom:1px solid #C8C8C8;font-size:14px;line-height:26px;padding-left:7px"><span class="ty">29.6</span></div><div class="a t" style="left:0;top:267.13px;width:80px;height:26.6px;background:#D4D0C8;border-top:1px solid #fff;border-left:1px solid #fff;border-right:1px solid #808080;border-bottom:1px solid #808080;font-size:14px;line-height:23px;padding-left:6px"><span class="ty">3750 rpm</span></div><div class="a" style="left:80px;top:267.13px;width:800px;height:26.6px;background:#EFEFF8"></div><div class="a t" style="left:80px;top:267.13px;width:80px;height:26.6px;border-right:1px solid #C8C8C8;border-bottom:1px solid #C8C8C8;font-size:14px;line-height:26px;padding-left:7px"><span class="ty">13.6</span></div><div class="a t" style="left:160px;top:267.13px;width:80px;height:26.6px;border-right:1px solid #C8C8C8;border-bottom:1px solid #C8C8C8;font-size:14px;line-height:26px;padding-left:7px"><span class="ty">15.15</span></div><div class="a t" style="left:240px;top:267.13px;width:80px;height:26.6px;border-right:1px solid #C8C8C8;border-bottom:1px solid #C8C8C8;font-size:14px;line-height:26px;padding-left:7px"><span class="ty">16.6</span></div><div class="a t" style="left:320px;top:267.13px;width:80px;height:26.6px;border-right:1px solid #C8C8C8;border-bottom:1px solid #C8C8C8;font-size:14px;line-height:26px;padding-left:7px"><span class="ty">18.15</span></div><div class="a t" style="left:400px;top:267.13px;width:80px;height:26.6px;border-right:1px solid #C8C8C8;border-bottom:1px solid #C8C8C8;font-size:14px;line-height:26px;padding-left:7px"><span class="ty">20</span></div><div class="a t" style="left:480px;top:267.13px;width:80px;height:26.6px;border-right:1px solid #C8C8C8;border-bottom:1px solid #C8C8C8;font-size:14px;line-height:26px;padding-left:7px"><span class="ty">23.2</span></div><div class="a t" style="left:560px;top:267.13px;width:80px;height:26.6px;border-right:1px solid #C8C8C8;border-bottom:1px solid #C8C8C8;font-size:14px;line-height:26px;padding-left:7px"><span class="ty">25.75</span></div><div class="a t" style="left:640px;top:267.13px;width:80px;height:26.6px;border-right:1px solid #C8C8C8;border-bottom:1px solid #C8C8C8;font-size:14px;line-height:26px;padding-left:7px"><span class="ty">28.05</span></div><div class="a t" style="left:720px;top:267.13px;width:80px;height:26.6px;border-right:1px solid #C8C8C8;border-bottom:1px solid #C8C8C8;font-size:14px;line-height:26px;padding-left:7px"><span class="ty">29</span></div><div class="a t" style="left:800px;top:267.13px;width:80px;height:26.6px;border-right:1px solid #C8C8C8;border-bottom:1px solid #C8C8C8;font-size:14px;line-height:26px;padding-left:7px"><span class="ty">29.6</span></div><div class="a t" style="left:0;top:293.70px;width:80px;height:26.6px;background:#D4D0C8;border-top:1px solid #fff;border-left:1px solid #fff;border-right:1px solid #808080;border-bottom:1px solid #808080;font-size:14px;line-height:23px;padding-left:6px"><span class="ty">4000 rpm</span></div><div class="a" style="left:80px;top:293.70px;width:800px;height:26.6px;background:#FFFFFF"></div><div class="a t" style="left:80px;top:293.70px;width:80px;height:26.6px;border-right:1px solid #C8C8C8;border-bottom:1px solid #C8C8C8;font-size:14px;line-height:26px;padding-left:7px"><span class="ty">14.4</span></div><div class="a t" style="left:160px;top:293.70px;width:80px;height:26.6px;border-right:1px solid #C8C8C8;border-bottom:1px solid #C8C8C8;font-size:14px;line-height:26px;padding-left:7px"><span class="ty">16.15</span></div><div class="a t" style="left:240px;top:293.70px;width:80px;height:26.6px;border-right:1px solid #C8C8C8;border-bottom:1px solid #C8C8C8;font-size:14px;line-height:26px;padding-left:7px"><span class="ty">17.65</span></div><div class="a t" style="left:320px;top:293.70px;width:80px;height:26.6px;border-right:1px solid #C8C8C8;border-bottom:1px solid #C8C8C8;font-size:14px;line-height:26px;padding-left:7px"><span class="ty">19.15</span></div><div class="a t" style="left:400px;top:293.70px;width:80px;height:26.6px;border-right:1px solid #C8C8C8;border-bottom:1px solid #C8C8C8;font-size:14px;line-height:26px;padding-left:7px"><span class="ty">20.4</span></div><div class="a t" style="left:480px;top:293.70px;width:80px;height:26.6px;border-right:1px solid #C8C8C8;border-bottom:1px solid #C8C8C8;font-size:14px;line-height:26px;padding-left:7px"><span class="ty">23.3</span></div><div class="a t" style="left:560px;top:293.70px;width:80px;height:26.6px;border-right:1px solid #C8C8C8;border-bottom:1px solid #C8C8C8;font-size:14px;line-height:26px;padding-left:7px"><span class="ty">26.45</span></div><div class="a t" style="left:640px;top:293.70px;width:80px;height:26.6px;border-right:1px solid #C8C8C8;border-bottom:1px solid #C8C8C8;font-size:14px;line-height:26px;padding-left:7px"><span class="ty">28.9</span></div><div class="a t" style="left:720px;top:293.70px;width:80px;height:26.6px;border-right:1px solid #C8C8C8;border-bottom:1px solid #C8C8C8;font-size:14px;line-height:26px;padding-left:7px"><span class="ty">29</span></div><div class="a t" style="left:800px;top:293.70px;width:80px;height:26.6px;border-right:1px solid #C8C8C8;border-bottom:1px solid #C8C8C8;font-size:14px;line-height:26px;padding-left:7px"><span class="ty">29.6</span></div><div class="a t" style="left:0;top:320.27px;width:80px;height:26.6px;background:#D4D0C8;border-top:1px solid #fff;border-left:1px solid #fff;border-right:1px solid #808080;border-bottom:1px solid #808080;font-size:14px;line-height:23px;padding-left:6px"><span class="ty">4250 rpm</span></div><div class="a" style="left:80px;top:320.27px;width:800px;height:26.6px;background:#EFEFF8"></div><div class="a t" style="left:80px;top:320.27px;width:80px;height:26.6px;border-right:1px solid #C8C8C8;border-bottom:1px solid #C8C8C8;font-size:14px;line-height:26px;padding-left:7px"><span class="ty">14.2</span></div><div class="a t" style="left:160px;top:320.27px;width:80px;height:26.6px;border-right:1px solid #C8C8C8;border-bottom:1px solid #C8C8C8;font-size:14px;line-height:26px;padding-left:7px"><span class="ty">15.95</span></div><div class="a t" style="left:240px;top:320.27px;width:80px;height:26.6px;border-right:1px solid #C8C8C8;border-bottom:1px solid #C8C8C8;font-size:14px;line-height:26px;padding-left:7px"><span class="ty">17.3</span></div><div class="a t" style="left:320px;top:320.27px;width:80px;height:26.6px;border-right:1px solid #C8C8C8;border-bottom:1px solid #C8C8C8;font-size:14px;line-height:26px;padding-left:7px"><span class="ty">18.95</span></div><div class="a t" style="left:400px;top:320.27px;width:80px;height:26.6px;border-right:1px solid #C8C8C8;border-bottom:1px solid #C8C8C8;font-size:14px;line-height:26px;padding-left:7px"><span class="ty">20.25</span></div><div class="a t" style="left:480px;top:320.27px;width:80px;height:26.6px;border-right:1px solid #C8C8C8;border-bottom:1px solid #C8C8C8;font-size:14px;line-height:26px;padding-left:7px"><span class="ty">23.4</span></div><div class="a t" style="left:560px;top:320.27px;width:80px;height:26.6px;border-right:1px solid #C8C8C8;border-bottom:1px solid #C8C8C8;font-size:14px;line-height:26px;padding-left:7px"><span class="ty">26.15</span></div><div class="a t" style="left:640px;top:320.27px;width:80px;height:26.6px;border-right:1px solid #C8C8C8;border-bottom:1px solid #C8C8C8;font-size:14px;line-height:26px;padding-left:7px"><span class="ty">28.55</span></div><div class="a t" style="left:720px;top:320.27px;width:80px;height:26.6px;border-right:1px solid #C8C8C8;border-bottom:1px solid #C8C8C8;font-size:14px;line-height:26px;padding-left:7px"><span class="ty">29</span></div><div class="a t" style="left:800px;top:320.27px;width:80px;height:26.6px;border-right:1px solid #C8C8C8;border-bottom:1px solid #C8C8C8;font-size:14px;line-height:26px;padding-left:7px"><span class="ty">29.6</span></div><div class="a t" style="left:0;top:346.84px;width:80px;height:26.6px;background:#D4D0C8;border-top:1px solid #fff;border-left:1px solid #fff;border-right:1px solid #808080;border-bottom:1px solid #808080;font-size:14px;line-height:23px;padding-left:6px"><span class="ty">4500 rpm</span></div><div class="a" style="left:80px;top:346.84px;width:800px;height:26.6px;background:#FFFFFF"></div><div class="a t" style="left:80px;top:346.84px;width:80px;height:26.6px;border-right:1px solid #C8C8C8;border-bottom:1px solid #C8C8C8;font-size:14px;line-height:26px;padding-left:7px"><span class="ty">14.2</span></div><div class="a t" style="left:160px;top:346.84px;width:80px;height:26.6px;border-right:1px solid #C8C8C8;border-bottom:1px solid #C8C8C8;font-size:14px;line-height:26px;padding-left:7px"><span class="ty">15.95</span></div><div class="a t" style="left:240px;top:346.84px;width:80px;height:26.6px;border-right:1px solid #C8C8C8;border-bottom:1px solid #C8C8C8;font-size:14px;line-height:26px;padding-left:7px"><span class="ty">17.3</span></div><div class="a t" style="left:320px;top:346.84px;width:80px;height:26.6px;border-right:1px solid #C8C8C8;border-bottom:1px solid #C8C8C8;font-size:14px;line-height:26px;padding-left:7px"><span class="ty">18.95</span></div><div class="a t" style="left:400px;top:346.84px;width:80px;height:26.6px;border-right:1px solid #C8C8C8;border-bottom:1px solid #C8C8C8;font-size:14px;line-height:26px;padding-left:7px"><span class="ty">20.25</span></div><div class="a t" style="left:480px;top:346.84px;width:80px;height:26.6px;border-right:1px solid #C8C8C8;border-bottom:1px solid #C8C8C8;font-size:14px;line-height:26px;padding-left:7px"><span class="ty">23.4</span></div><div class="a t" style="left:560px;top:346.84px;width:80px;height:26.6px;border-right:1px solid #C8C8C8;border-bottom:1px solid #C8C8C8;font-size:14px;line-height:26px;padding-left:7px"><span class="ty">26.2</span></div><div class="a t" style="left:640px;top:346.84px;width:80px;height:26.6px;border-right:1px solid #C8C8C8;border-bottom:1px solid #C8C8C8;font-size:14px;line-height:26px;padding-left:7px"><span class="ty">28.6</span></div><div class="a t" style="left:720px;top:346.84px;width:80px;height:26.6px;border-right:1px solid #C8C8C8;border-bottom:1px solid #C8C8C8;font-size:14px;line-height:26px;padding-left:7px"><span class="ty">29</span></div><div class="a t" style="left:800px;top:346.84px;width:80px;height:26.6px;border-right:1px solid #C8C8C8;border-bottom:1px solid #C8C8C8;font-size:14px;line-height:26px;padding-left:7px"><span class="ty">29.6</span></div><div class="a t" style="left:0;top:373.41px;width:80px;height:26.6px;background:#D4D0C8;border-top:1px solid #fff;border-left:1px solid #fff;border-right:1px solid #808080;border-bottom:1px solid #808080;font-size:14px;line-height:23px;padding-left:6px"><span class="ty">4750 rpm</span></div><div class="a" style="left:80px;top:373.41px;width:800px;height:26.6px;background:#EFEFF8"></div><div class="a t" style="left:80px;top:373.41px;width:80px;height:26.6px;border-right:1px solid #C8C8C8;border-bottom:1px solid #C8C8C8;font-size:14px;line-height:26px;padding-left:7px"><span class="ty">14.2</span></div><div class="a t" style="left:160px;top:373.41px;width:80px;height:26.6px;border-right:1px solid #C8C8C8;border-bottom:1px solid #C8C8C8;font-size:14px;line-height:26px;padding-left:7px"><span class="ty">15.65</span></div><div class="a t" style="left:240px;top:373.41px;width:80px;height:26.6px;border-right:1px solid #C8C8C8;border-bottom:1px solid #C8C8C8;font-size:14px;line-height:26px;padding-left:7px"><span class="ty">16.9</span></div><div class="a t" style="left:320px;top:373.41px;width:80px;height:26.6px;border-right:1px solid #C8C8C8;border-bottom:1px solid #C8C8C8;font-size:14px;line-height:26px;padding-left:7px"><span class="ty">18.5</span></div><div class="a t" style="left:400px;top:373.41px;width:80px;height:26.6px;border-right:1px solid #C8C8C8;border-bottom:1px solid #C8C8C8;font-size:14px;line-height:26px;padding-left:7px"><span class="ty">20</span></div><div class="a t" style="left:480px;top:373.41px;width:80px;height:26.6px;border-right:1px solid #C8C8C8;border-bottom:1px solid #C8C8C8;font-size:14px;line-height:26px;padding-left:7px"><span class="ty">23.35</span></div><div class="a t" style="left:560px;top:373.41px;width:80px;height:26.6px;border-right:1px solid #C8C8C8;border-bottom:1px solid #C8C8C8;font-size:14px;line-height:26px;padding-left:7px"><span class="ty">26.1</span></div><div class="a t" style="left:640px;top:373.41px;width:80px;height:26.6px;border-right:1px solid #C8C8C8;border-bottom:1px solid #C8C8C8;font-size:14px;line-height:26px;padding-left:7px"><span class="ty">28.45</span></div><div class="a t" style="left:720px;top:373.41px;width:80px;height:26.6px;border-right:1px solid #C8C8C8;border-bottom:1px solid #C8C8C8;font-size:14px;line-height:26px;padding-left:7px"><span class="ty">29.9</span></div><div class="a t" style="left:800px;top:373.41px;width:80px;height:26.6px;border-right:1px solid #C8C8C8;border-bottom:1px solid #C8C8C8;font-size:14px;line-height:26px;padding-left:7px"><span class="ty">29.6</span></div><div class="a t" style="left:0;top:399.98px;width:80px;height:26.6px;background:#D4D0C8;border-top:1px solid #fff;border-left:1px solid #fff;border-right:1px solid #808080;border-bottom:1px solid #808080;font-size:14px;line-height:23px;padding-left:6px"><span class="ty">5000 rpm</span></div><div class="a" style="left:80px;top:399.98px;width:800px;height:26.6px;background:#FFFFFF"></div><div class="a t" style="left:80px;top:399.98px;width:80px;height:26.6px;border-right:1px solid #C8C8C8;border-bottom:1px solid #C8C8C8;font-size:14px;line-height:26px;padding-left:7px"><span class="ty">14.2</span></div><div class="a t" style="left:160px;top:399.98px;width:80px;height:26.6px;border-right:1px solid #C8C8C8;border-bottom:1px solid #C8C8C8;font-size:14px;line-height:26px;padding-left:7px"><span class="ty">15.95</span></div><div class="a t" style="left:240px;top:399.98px;width:80px;height:26.6px;border-right:1px solid #C8C8C8;border-bottom:1px solid #C8C8C8;font-size:14px;line-height:26px;padding-left:7px"><span class="ty">17.3</span></div><div class="a t" style="left:320px;top:399.98px;width:80px;height:26.6px;border-right:1px solid #C8C8C8;border-bottom:1px solid #C8C8C8;font-size:14px;line-height:26px;padding-left:7px"><span class="ty">18.95</span></div><div class="a t" style="left:400px;top:399.98px;width:80px;height:26.6px;border-right:1px solid #C8C8C8;border-bottom:1px solid #C8C8C8;font-size:14px;line-height:26px;padding-left:7px"><span class="ty">20.1</span></div><div class="a t" style="left:480px;top:399.98px;width:80px;height:26.6px;border-right:1px solid #C8C8C8;border-bottom:1px solid #C8C8C8;font-size:14px;line-height:26px;padding-left:7px"><span class="ty">23.7</span></div><div class="a t" style="left:560px;top:399.98px;width:80px;height:26.6px;border-right:1px solid #C8C8C8;border-bottom:1px solid #C8C8C8;font-size:14px;line-height:26px;padding-left:7px"><span class="ty">25.95</span></div><div class="a t" style="left:640px;top:399.98px;width:80px;height:26.6px;border-right:1px solid #C8C8C8;border-bottom:1px solid #C8C8C8;font-size:14px;line-height:26px;padding-left:7px"><span class="ty">28.3</span></div><div class="a t" style="left:720px;top:399.98px;width:80px;height:26.6px;background:#7272BE;border-right:1px solid #C8C8C8;border-bottom:1px solid #C8C8C8;font-size:14px;line-height:26px;padding-left:7px"><span class="ty">29.55</span></div><div class="a t" style="left:800px;top:399.98px;width:80px;height:26.6px;border-right:1px solid #C8C8C8;border-bottom:1px solid #C8C8C8;font-size:14px;line-height:26px;padding-left:7px"><span class="ty">29.6</span></div><div class="a t" style="left:0;top:426.55px;width:80px;height:26.6px;background:#D4D0C8;border-top:1px solid #fff;border-left:1px solid #fff;border-right:1px solid #808080;border-bottom:1px solid #808080;font-size:14px;line-height:23px;padding-left:6px"><span class="ty">5250 rpm</span></div><div class="a" style="left:80px;top:426.55px;width:800px;height:26.6px;background:#EFEFF8"></div><div class="a t" style="left:80px;top:426.55px;width:80px;height:26.6px;border-right:1px solid #C8C8C8;border-bottom:1px solid #C8C8C8;font-size:14px;line-height:26px;padding-left:7px"><span class="ty">14.2</span></div><div class="a t" style="left:160px;top:426.55px;width:80px;height:26.6px;border-right:1px solid #C8C8C8;border-bottom:1px solid #C8C8C8;font-size:14px;line-height:26px;padding-left:7px"><span class="ty">15.95</span></div><div class="a t" style="left:240px;top:426.55px;width:80px;height:26.6px;border-right:1px solid #C8C8C8;border-bottom:1px solid #C8C8C8;font-size:14px;line-height:26px;padding-left:7px"><span class="ty">17.3</span></div><div class="a t" style="left:320px;top:426.55px;width:80px;height:26.6px;border-right:1px solid #C8C8C8;border-bottom:1px solid #C8C8C8;font-size:14px;line-height:26px;padding-left:7px"><span class="ty">18.95</span></div><div class="a t" style="left:400px;top:426.55px;width:80px;height:26.6px;border-right:1px solid #C8C8C8;border-bottom:1px solid #C8C8C8;font-size:14px;line-height:26px;padding-left:7px"><span class="ty">20.75</span></div><div class="a t" style="left:480px;top:426.55px;width:80px;height:26.6px;border-right:1px solid #C8C8C8;border-bottom:1px solid #C8C8C8;font-size:14px;line-height:26px;padding-left:7px"><span class="ty">24.1</span></div><div class="a t" style="left:560px;top:426.55px;width:80px;height:26.6px;border-right:1px solid #C8C8C8;border-bottom:1px solid #C8C8C8;font-size:14px;line-height:26px;padding-left:7px"><span class="ty">26.4</span></div><div class="a t" style="left:640px;top:426.55px;width:80px;height:26.6px;border-right:1px solid #C8C8C8;border-bottom:1px solid #C8C8C8;font-size:14px;line-height:26px;padding-left:7px"><span class="ty">28.4</span></div><div class="a t" style="left:720px;top:426.55px;width:80px;height:26.6px;border-right:1px solid #C8C8C8;border-bottom:1px solid #C8C8C8;font-size:14px;line-height:26px;padding-left:7px"><span class="ty">29.75</span></div><div class="a t" style="left:800px;top:426.55px;width:80px;height:26.6px;border-right:1px solid #C8C8C8;border-bottom:1px solid #C8C8C8;font-size:14px;line-height:26px;padding-left:7px"><span class="ty">29.6</span></div></div><div class="a" style="left:855px;top:0;width:18px;height:446px;background:#fff;border-left:1px solid #909090"></div><div class="a" style="left:855px;top:0px;width:18px;height:21px;background:#D4D0C8;border-top:1px solid #fff;border-left:1px solid #fff;border-right:1px solid #404040;border-bottom:1px solid #404040"></div><div class="a" style="left:859px;top:8px;width:0;height:0;border-left:5px solid transparent;border-right:5px solid transparent;border-bottom:5px solid #000"></div><div class="a" style="left:855px;top:150px;width:18px;height:41px;background:#D4D0C8;border-top:1px solid #fff;border-left:1px solid #fff;border-right:1px solid #404040;border-bottom:1px solid #404040"></div><div class="a" style="left:855px;top:425px;width:18px;height:21px;background:#D4D0C8;border-top:1px solid #fff;border-left:1px solid #fff;border-right:1px solid #404040;border-bottom:1px solid #404040"></div><div class="a" style="left:859px;top:434px;width:0;height:0;border-left:5px solid transparent;border-right:5px solid transparent;border-top:5px solid #000"></div><div class="a" style="left:0;top:446px;width:855px;height:21px;background:#fff"></div><div class="a" style="left:0px;top:446px;width:21px;height:21px;background:#D4D0C8;border-top:1px solid #fff;border-left:1px solid #fff;border-right:1px solid #404040;border-bottom:1px solid #404040"></div><div class="a" style="left:8px;top:452px;width:0;height:0;border-top:5px solid transparent;border-bottom:5px solid transparent;border-right:5px solid #000"></div><div class="a" style="left:704px;top:446px;width:64px;height:21px;background:#D4D0C8;border-top:1px solid #fff;border-left:1px solid #fff;border-right:1px solid #404040;border-bottom:1px solid #404040"></div><div class="a" style="left:835px;top:446px;width:20px;height:21px;background:#D4D0C8;border-top:1px solid #fff;border-left:1px solid #fff;border-right:1px solid #404040;border-bottom:1px solid #404040"></div><div class="a" style="left:843px;top:452px;width:0;height:0;border-top:5px solid transparent;border-bottom:5px solid transparent;border-left:5px solid #000"></div><div class="a" style="left:855px;top:446px;width:18px;height:21px;background:#D4D0C8"></div></div>
<div class="a" style="left:827px;top:677px;width:873px;height:2px;background:#fff"></div>
<div class="a" style="left:220px;top:689px;width:577px;height:33px;border:2px solid #1A1008"></div>
<div class="btn sv" style="left:7px;top:689px;width:64px;height:33px;font-size:17px;font-weight:bold;line-height:28px">Hold</div>
<div class="btn sv" style="left:71px;top:689px;width:64px;height:33px;font-size:17px;font-weight:bold;line-height:28px">Reset</div>
<div class="btn sv" style="left:135px;top:689px;width:64px;height:33px;font-size:17px;font-weight:bold;line-height:28px">Mode</div>
<div class="btn" style="left:1448px;top:689px;width:33px;height:33px;font-size:18px;line-height:28px">-</div>
<div class="a" style="left:1480px;top:689px;width:87px;height:33px;background:#9DD2E2;border-top:2px solid #3E4A5A;border-left:2px solid #3E4A5A;border-bottom:2px solid #3E4A5A"></div>
<div class="a t" style="left:1480px;top:691px;width:87px;text-align:center;font-size:25px;line-height:29px;color:#000">0.005</div>
<div class="btn" style="left:1566px;top:689px;width:32px;height:33px;font-size:18px;line-height:28px">+</div>
<div class="btn sv" style="left:1608px;top:689px;width:75px;height:33px;font-size:17px;font-weight:bold;line-height:28px">Copy</div>
<svg class="a" style="left:130px;top:757px" width="160" height="150" viewBox="130 757 160 150"><ellipse cx="210" cy="832" rx="76" ry="68.5" fill="#EEE1E8"/><line x1="156.3" y1="880.4" x2="161.6" y2="875.6" stroke="#8A1E2A" stroke-width="1.7"/><text x="171.3" y="873.6" font-family="Liberation Sans" font-style="italic" font-size="14" fill="#8A1E2A" text-anchor="middle">0</text><line x1="134.0" y1="832.0" x2="141.6" y2="832.0" stroke="#8A1E2A" stroke-width="1.7"/><text x="155.3" y="837.0" font-family="Liberation Sans" font-style="italic" font-size="14" fill="#8A1E2A" text-anchor="middle">10</text><line x1="156.3" y1="783.6" x2="161.6" y2="788.4" stroke="#8A1E2A" stroke-width="1.7"/><text x="171.3" y="800.4" font-family="Liberation Sans" font-style="italic" font-size="14" fill="#8A1E2A" text-anchor="middle">20</text><line x1="210.0" y1="763.5" x2="210.0" y2="770.4" stroke="#8A1E2A" stroke-width="1.7"/><text x="210.0" y="785.3" font-family="Liberation Sans" font-style="italic" font-size="14" fill="#8A1E2A" text-anchor="middle">30</text><line x1="263.7" y1="783.6" x2="258.4" y2="788.4" stroke="#8A1E2A" stroke-width="1.7"/><text x="248.7" y="800.4" font-family="Liberation Sans" font-style="italic" font-size="14" fill="#8A1E2A" text-anchor="middle">40</text><line x1="286.0" y1="832.0" x2="278.4" y2="832.0" stroke="#8A1E2A" stroke-width="1.7"/><text x="264.7" y="837.0" font-family="Liberation Sans" font-style="italic" font-size="14" fill="#8A1E2A" text-anchor="middle">50</text><line x1="263.7" y1="880.4" x2="258.4" y2="875.6" stroke="#8A1E2A" stroke-width="1.7"/><text x="248.7" y="873.6" font-family="Liberation Sans" font-style="italic" font-size="14" fill="#8A1E2A" text-anchor="middle">60</text><line x1="210" y1="832" x2="180.3" y2="861.7" stroke="#F01818" stroke-width="2.6"/><circle cx="210" cy="832" r="4.5" fill="#EE2222"/><rect x="183" y="879" width="52" height="8" fill="#000"/><rect x="183" y="879" width="4" height="8" fill="#FFF000"/></svg>
<div class="a t" style="left:60px;top:922px;width:300px;text-align:center;font:bold 15px 'Liberation Sans';color:#F5F000">Advance (degrees)</div>
<svg class="a" style="left:367px;top:757px" width="160" height="150" viewBox="367 757 160 150"><ellipse cx="447" cy="832" rx="76" ry="68.5" fill="#EEE1E8"/><line x1="393.3" y1="880.4" x2="398.6" y2="875.6" stroke="#8A1E2A" stroke-width="1.7"/><text x="408.3" y="873.6" font-family="Liberation Sans" font-style="italic" font-size="14" fill="#8A1E2A" text-anchor="middle">0</text><line x1="371.0" y1="832.0" x2="378.6" y2="832.0" stroke="#8A1E2A" stroke-width="1.7"/><text x="392.3" y="837.0" font-family="Liberation Sans" font-style="italic" font-size="14" fill="#8A1E2A" text-anchor="middle">20</text><line x1="393.3" y1="783.6" x2="398.6" y2="788.4" stroke="#8A1E2A" stroke-width="1.7"/><text x="408.3" y="800.4" font-family="Liberation Sans" font-style="italic" font-size="14" fill="#8A1E2A" text-anchor="middle">40</text><line x1="447.0" y1="763.5" x2="447.0" y2="770.4" stroke="#8A1E2A" stroke-width="1.7"/><text x="447.0" y="785.3" font-family="Liberation Sans" font-style="italic" font-size="14" fill="#8A1E2A" text-anchor="middle">60</text><line x1="500.7" y1="783.6" x2="495.4" y2="788.4" stroke="#8A1E2A" stroke-width="1.7"/><text x="485.7" y="800.4" font-family="Liberation Sans" font-style="italic" font-size="14" fill="#8A1E2A" text-anchor="middle">80</text><line x1="523.0" y1="832.0" x2="515.4" y2="832.0" stroke="#8A1E2A" stroke-width="1.7"/><text x="501.7" y="837.0" font-family="Liberation Sans" font-style="italic" font-size="14" fill="#8A1E2A" text-anchor="middle">100</text><line x1="500.7" y1="880.4" x2="495.4" y2="875.6" stroke="#8A1E2A" stroke-width="1.7"/><text x="485.7" y="873.6" font-family="Liberation Sans" font-style="italic" font-size="14" fill="#8A1E2A" text-anchor="middle"></text><line x1="447" y1="832" x2="417.3" y2="861.7" stroke="#F01818" stroke-width="2.6"/><circle cx="447" cy="832" r="4.5" fill="#EE2222"/></svg>
<div class="a t" style="left:301px;top:922px;width:300px;text-align:center;font:bold 15px 'Liberation Sans';color:#F5F000">Duty cycle (%)</div>
<svg class="a" style="left:602px;top:757px" width="160" height="150" viewBox="602 757 160 150"><ellipse cx="682" cy="832" rx="76" ry="68.5" fill="#EEE1E8"/><line x1="628.3" y1="880.4" x2="633.6" y2="875.6" stroke="#8A1E2A" stroke-width="1.7"/><text x="643.3" y="873.6" font-family="Liberation Sans" font-style="italic" font-size="14" fill="#8A1E2A" text-anchor="middle">0</text><line x1="606.0" y1="832.0" x2="613.6" y2="832.0" stroke="#8A1E2A" stroke-width="1.7"/><text x="627.3" y="837.0" font-family="Liberation Sans" font-style="italic" font-size="14" fill="#8A1E2A" text-anchor="middle">2</text><line x1="628.3" y1="783.6" x2="633.6" y2="788.4" stroke="#8A1E2A" stroke-width="1.7"/><text x="643.3" y="800.4" font-family="Liberation Sans" font-style="italic" font-size="14" fill="#8A1E2A" text-anchor="middle">4</text><line x1="682.0" y1="763.5" x2="682.0" y2="770.4" stroke="#8A1E2A" stroke-width="1.7"/><text x="682.0" y="785.3" font-family="Liberation Sans" font-style="italic" font-size="14" fill="#8A1E2A" text-anchor="middle">6</text><line x1="735.7" y1="783.6" x2="730.4" y2="788.4" stroke="#8A1E2A" stroke-width="1.7"/><text x="720.7" y="800.4" font-family="Liberation Sans" font-style="italic" font-size="14" fill="#8A1E2A" text-anchor="middle">8</text><line x1="758.0" y1="832.0" x2="750.4" y2="832.0" stroke="#8A1E2A" stroke-width="1.7"/><text x="736.7" y="837.0" font-family="Liberation Sans" font-style="italic" font-size="14" fill="#8A1E2A" text-anchor="middle">10</text><line x1="735.7" y1="880.4" x2="730.4" y2="875.6" stroke="#8A1E2A" stroke-width="1.7"/><text x="720.7" y="873.6" font-family="Liberation Sans" font-style="italic" font-size="14" fill="#8A1E2A" text-anchor="middle">12</text><line x1="682" y1="832" x2="652.3" y2="861.7" stroke="#F01818" stroke-width="2.6"/><circle cx="682" cy="832" r="4.5" fill="#EE2222"/></svg>
<div class="a t" style="left:532px;top:922px;width:300px;text-align:center;font:bold 15px 'Liberation Sans';color:#F5F000">Engine speed (RPM x 100)</div>
<svg class="a" style="left:837px;top:757px" width="160" height="150" viewBox="837 757 160 150"><ellipse cx="917" cy="832" rx="76" ry="68.5" fill="#EEE1E8"/><line x1="863.3" y1="880.4" x2="868.6" y2="875.6" stroke="#8A1E2A" stroke-width="1.7"/><text x="878.3" y="873.6" font-family="Liberation Sans" font-style="italic" font-size="14" fill="#8A1E2A" text-anchor="middle">-20</text><line x1="841.0" y1="832.0" x2="848.6" y2="832.0" stroke="#8A1E2A" stroke-width="1.7"/><text x="862.3" y="837.0" font-family="Liberation Sans" font-style="italic" font-size="14" fill="#8A1E2A" text-anchor="middle">0</text><line x1="863.3" y1="783.6" x2="868.6" y2="788.4" stroke="#8A1E2A" stroke-width="1.7"/><text x="878.3" y="800.4" font-family="Liberation Sans" font-style="italic" font-size="14" fill="#8A1E2A" text-anchor="middle">20</text><line x1="917.0" y1="763.5" x2="917.0" y2="770.4" stroke="#8A1E2A" stroke-width="1.7"/><text x="917.0" y="785.3" font-family="Liberation Sans" font-style="italic" font-size="14" fill="#8A1E2A" text-anchor="middle">40</text><line x1="970.7" y1="783.6" x2="965.4" y2="788.4" stroke="#8A1E2A" stroke-width="1.7"/><text x="955.7" y="800.4" font-family="Liberation Sans" font-style="italic" font-size="14" fill="#8A1E2A" text-anchor="middle">60</text><line x1="993.0" y1="832.0" x2="985.4" y2="832.0" stroke="#8A1E2A" stroke-width="1.7"/><text x="971.7" y="837.0" font-family="Liberation Sans" font-style="italic" font-size="14" fill="#8A1E2A" text-anchor="middle">80</text><line x1="970.7" y1="880.4" x2="965.4" y2="875.6" stroke="#8A1E2A" stroke-width="1.7"/><text x="955.7" y="873.6" font-family="Liberation Sans" font-style="italic" font-size="14" fill="#8A1E2A" text-anchor="middle">100</text><line x1="917" y1="832" x2="887.3" y2="861.7" stroke="#F01818" stroke-width="2.6"/><circle cx="917" cy="832" r="4.5" fill="#EE2222"/></svg>
<div class="a t" style="left:767px;top:922px;width:300px;text-align:center;font:bold 15px 'Liberation Sans';color:#F5F000">Coolant temp (C)</div>
<svg class="a" style="left:1072px;top:757px" width="160" height="150" viewBox="1072 757 160 150"><ellipse cx="1152" cy="832" rx="76" ry="68.5" fill="#EEE1E8"/><line x1="1098.3" y1="880.4" x2="1103.6" y2="875.6" stroke="#8A1E2A" stroke-width="1.7"/><text x="1113.3" y="873.6" font-family="Liberation Sans" font-style="italic" font-size="14" fill="#8A1E2A" text-anchor="middle">0</text><line x1="1076.0" y1="832.0" x2="1083.6" y2="832.0" stroke="#8A1E2A" stroke-width="1.7"/><text x="1097.3" y="837.0" font-family="Liberation Sans" font-style="italic" font-size="14" fill="#8A1E2A" text-anchor="middle">20</text><line x1="1098.3" y1="783.6" x2="1103.6" y2="788.4" stroke="#8A1E2A" stroke-width="1.7"/><text x="1113.3" y="800.4" font-family="Liberation Sans" font-style="italic" font-size="14" fill="#8A1E2A" text-anchor="middle">40</text><line x1="1152.0" y1="763.5" x2="1152.0" y2="770.4" stroke="#8A1E2A" stroke-width="1.7"/><text x="1152.0" y="785.3" font-family="Liberation Sans" font-style="italic" font-size="14" fill="#8A1E2A" text-anchor="middle">60</text><line x1="1205.7" y1="783.6" x2="1200.4" y2="788.4" stroke="#8A1E2A" stroke-width="1.7"/><text x="1190.7" y="800.4" font-family="Liberation Sans" font-style="italic" font-size="14" fill="#8A1E2A" text-anchor="middle">80</text><line x1="1228.0" y1="832.0" x2="1220.4" y2="832.0" stroke="#8A1E2A" stroke-width="1.7"/><text x="1206.7" y="837.0" font-family="Liberation Sans" font-style="italic" font-size="14" fill="#8A1E2A" text-anchor="middle">100</text><line x1="1205.7" y1="880.4" x2="1200.4" y2="875.6" stroke="#8A1E2A" stroke-width="1.7"/><text x="1190.7" y="873.6" font-family="Liberation Sans" font-style="italic" font-size="14" fill="#8A1E2A" text-anchor="middle"></text><line x1="1152" y1="832" x2="1122.3" y2="861.7" stroke="#F01818" stroke-width="2.6"/><circle cx="1152" cy="832" r="4.5" fill="#EE2222"/></svg>
<div class="a t" style="left:1006px;top:922px;width:300px;text-align:center;font:bold 15px 'Liberation Sans';color:#F5F000">TPS (%)</div>
<svg class="a" style="left:1330px;top:1140px" width="370" height="95" viewBox="1330 1140 370 95">
<text x="1344" y="1202" font-family="Liberation Sans" font-weight="bold" font-size="68" fill="#7A4512" stroke="#7A4512" stroke-width="7" stroke-linejoin="round" textLength="337" lengthAdjust="spacingAndGlyphs">DSPORT</text>
<text x="1343" y="1221" font-family="Liberation Sans" font-weight="bold" font-size="18" fill="#7A4512" stroke="#7A4512" stroke-width="1.4" textLength="338" lengthAdjust="spacingAndGlyphs">PERFORMANCE + TECH MAGAZINE</text>
</svg>
<div class="a" style="left:0;top:1240px;width:1700px;height:35px;background:#D6D2CA;border-top:2px solid #F4F2EE"></div>
<div class="a" style="left:0;top:1245px;width:67px;height:28px;background:#D4D0C8;border-top:1px solid #fff;border-left:1px solid #fff;border-right:2px solid #404040;border-bottom:2px solid #404040"></div>
<svg class="a" style="left:2px;top:1249px" width="20" height="20" viewBox="0 0 20 20">
<path d="M1 3 Q5 1 9 3 L8 9 Q4 7 1 9Z" fill="#E8532A"/><path d="M10 3 Q14 5 19 3 L18 9 Q14 11 9 9Z" fill="#5AB530"/>
<path d="M1 10 Q4 8 8 10 L7 17 Q4 15 0 17Z" fill="#3A78D8"/><path d="M9 10 Q13 12 18 10 L17 17 Q13 19 8 17Z" fill="#F4C016"/></svg>
<div class="a t" style="left:24px;top:1249px;font:bold 17px 'Liberation Sans';color:#000">Start</div>
<div class="a" style="left:77px;top:1249px;width:3px;height:22px;border-left:1px solid #a0a0a0;border-right:1px solid #fff"></div>
<svg class="a" style="left:90px;top:1248px" width="22" height="22" viewBox="0 0 22 22"><rect x="2" y="2" width="17" height="18" rx="3" fill="#4C8ED8" transform="rotate(-8 11 11)"/><path d="M6 8 Q11 4 15 8 L15 12 L8 12 Q8 15 12 15 L15 14" stroke="#fff" stroke-width="2.2" fill="none"/><circle cx="18" cy="6" r="2" fill="#E84020"/></svg>
<svg class="a" style="left:120px;top:1248px" width="22" height="22" viewBox="0 0 22 22"><circle cx="11" cy="11" r="9.5" fill="#2F5FB8"/><path d="M11 1.5 A9.5 9.5 0 0 1 20.5 11" stroke="#48A030" stroke-width="2.5" fill="none"/><path d="M20.5 11 A9.5 9.5 0 0 1 11 20.5" stroke="#E8B020" stroke-width="2.5" fill="none"/><circle cx="11" cy="11" r="6" fill="#DDE6F6"/><polygon points="9,7.5 15,11 9,14.5" fill="#203C90"/></svg>
<svg class="a" style="left:151px;top:1248px" width="22" height="22" viewBox="0 0 22 22"><rect x="7" y="3" width="13" height="14" rx="2" fill="#1A2A50"/><rect x="9" y="5" width="9" height="10" fill="#4A9AD8"/><path d="M2 6 L7 6 L8 8 L14 8 L14 17 L2 17Z" fill="#F4C030" stroke="#C02020" stroke-width="1"/><rect x="9" y="18" width="8" height="2" fill="#2040A0"/></svg>
<svg class="a" style="left:182px;top:1248px" width="22" height="22" viewBox="0 0 22 22"><circle cx="11" cy="11" r="9.5" fill="#E0C0E0"/><path d="M11 1.5 A9.5 9.5 0 0 1 20.5 11 L11 11Z" fill="#B070C0"/><path d="M11 20.5 A9.5 9.5 0 0 1 1.5 11 L11 11Z" fill="#C080C8"/><circle cx="11" cy="11" r="2.5" fill="#f4f0f4" stroke="#999" stroke-width=".6"/></svg>
<svg class="a" style="left:212px;top:1248px" width="22" height="22" viewBox="0 0 22 22"><rect x="4" y="2" width="14" height="18" rx="1.5" fill="#8AA8D8" stroke="#5070A8" stroke-width="1"/><rect x="6" y="4" width="10" height="3.5" fill="#D8E4F4"/><g fill="#E8F0FA"><rect x="6" y="9" width="2.5" height="2"/><rect x="10" y="9" width="2.5" height="2"/><rect x="14" y="9" width="2" height="2" fill="#F09030"/><rect x="6" y="12.5" width="2.5" height="2"/><rect x="10" y="12.5" width="2.5" height="2"/><rect x="6" y="16" width="2.5" height="2"/><rect x="10" y="16" width="2.5" height="2"/></g></svg>
<svg class="a" style="left:243px;top:1248px" width="22" height="22" viewBox="0 0 22 22"><rect x="2" y="2" width="18" height="18" fill="#F6F6F6" stroke="#808080" stroke-width="1"/><path d="M4 18 Q8 6 13 4 Q16 3 19 5" stroke="#2050C0" stroke-width="1.6" fill="none"/><path d="M5 18 Q10 10 14 8 Q17 7 19 8" stroke="#30A040" stroke-width="1.4" fill="none"/></svg>
<svg class="a" style="left:273px;top:1248px" width="22" height="22" viewBox="0 0 22 22"><rect x="2" y="2" width="18" height="18" fill="#F6F6F6" stroke="#808080" stroke-width="1"/><path d="M4 18 Q8 6 13 4 Q16 3 19 5" stroke="#2050C0" stroke-width="1.6" fill="none"/><path d="M5 18 Q10 10 14 8 Q17 7 19 8" stroke="#30A040" stroke-width="1.4" fill="none"/></svg>
<svg class="a" style="left:304px;top:1248px" width="22" height="22" viewBox="0 0 22 22"><rect x="2" y="2" width="18" height="18" fill="#2A60C0"/><rect x="5" y="5" width="3" height="3" fill="#B0D0F8"/><rect x="11" y="9" width="4" height="4" fill="#E0F0FF"/><rect x="6" y="14" width="3" height="3" fill="#90B8F0"/><rect x="15" y="15" width="2" height="2" fill="#E0F0FF"/></svg>
<svg class="a" style="left:335px;top:1248px" width="22" height="22" viewBox="0 0 22 22"><rect x="2" y="3" width="18" height="16" fill="#fff" stroke="#202020" stroke-width="1.4"/><rect x="2.7" y="3.7" width="16.6" height="3" fill="#2850B0"/></svg>
<svg class="a" style="left:365px;top:1248px" width="22" height="22" viewBox="0 0 22 22"><circle cx="11" cy="12" r="8.5" fill="#E03020"/><path d="M5 16 L17 7" stroke="#fff" stroke-width="2.5"/><ellipse cx="14" cy="7" rx="6" ry="3" fill="#C0C8E0" opacity=".9"/></svg>
<svg class="a" style="left:396px;top:1248px" width="22" height="22" viewBox="0 0 22 22"><rect x="2" y="2" width="18" height="18" fill="#FFF0C8" stroke="#F0A030" stroke-width="1.8"/><circle cx="11" cy="11" r="5.5" fill="none" stroke="#F09020" stroke-width="1.6"/><path d="M11 7.5 L11 11 L13.5 11" stroke="#F09020" stroke-width="1.4" fill="none"/></svg>
<svg class="a" style="left:426px;top:1248px" width="22" height="22" viewBox="0 0 22 22"><rect x="2" y="2" width="18" height="18" fill="#fff" stroke="#303030" stroke-width="1.4"/><path d="M4.5 8 L7 16 L9.5 10 L12 16 L15 8" stroke="#101010" stroke-width="1.8" fill="none"/><circle cx="16.5" cy="6" r="1.2" fill="#30A0D0"/></svg>
<svg class="a" style="left:457px;top:1248px" width="22" height="22" viewBox="0 0 22 22"><rect x="3" y="4" width="12" height="12" fill="#A8C0D8" stroke="#708090" stroke-width="1"/><rect x="10" y="6" width="9" height="13" fill="#B8D0B0" stroke="#6A8A70" stroke-width="1"/><rect x="3" y="17" width="9" height="3" fill="#B0B0B0"/></svg>
<svg class="a" style="left:488px;top:1248px" width="22" height="22" viewBox="0 0 22 22"><rect x="3" y="3" width="16" height="16" fill="#F4F4F4" stroke="#303030" stroke-width="1.3"/><rect x="3.6" y="3.6" width="14.8" height="3" fill="#3050A0"/><polygon points="6,13 10,10.5 10,15.5" fill="#D03020"/><polygon points="16,13 12,10.5 12,15.5" fill="#2080D0"/></svg>
<svg class="a" style="left:518px;top:1248px" width="22" height="22" viewBox="0 0 22 22"><rect x="2" y="2" width="18" height="18" fill="#F6F6F6" stroke="#808080" stroke-width="1"/><path d="M4 18 Q8 6 13 4 Q16 3 19 5" stroke="#2050C0" stroke-width="1.6" fill="none"/><path d="M5 18 Q10 10 14 8 Q17 7 19 8" stroke="#30A040" stroke-width="1.4" fill="none"/></svg>
<svg class="a" style="left:549px;top:1248px" width="22" height="22" viewBox="0 0 22 22"><rect x="2" y="4" width="9" height="14" fill="#202020"/><rect x="3" y="6" width="3" height="3" fill="#fff"/><rect x="6" y="10" width="3" height="3" fill="#fff"/><rect x="3" y="14" width="3" height="3" fill="#fff"/><path d="M7 3 L20 3 L13 20 L9 20 L14 7 L7 7Z" fill="#D02020"/></svg>
<svg class="a" style="left:579px;top:1248px" width="22" height="22" viewBox="0 0 22 22"><circle cx="11" cy="10.5" r="8" fill="#4AA0E8"/><circle cx="11" cy="10.5" r="4.5" fill="#fff"/><path d="M11 10.5 L16 5" stroke="#2070C0" stroke-width="2"/><path d="M15 16 L19 20" stroke="#4AA0E8" stroke-width="3"/></svg>
<svg class="a" style="left:610px;top:1248px" width="22" height="22" viewBox="0 0 22 22"><circle cx="11" cy="11" r="9.5" fill="#3A5FB0"/><path d="M11 1.5 A9.5 9.5 0 1 1 2 8 Q4 12 8 13 Q5 9 8 6 Q9 9 12 9 Q10 5 14 3 Q12 2 11 1.5Z" fill="#F07818"/><path d="M4 14 Q7 19 12 19 Q17 18 19 13 Q16 17 11 16 Q6 16 4 14Z" fill="#F4B030"/></svg>
<div class="a" style="left:770px;top:1249px;width:3px;height:22px;border-left:1px solid #a0a0a0;border-right:1px solid #fff"></div>
<div class="a t" style="left:776px;top:1245px;width:214px;height:28px;background:#D4D0C8;border-top:1px solid #fff;border-left:1px solid #fff;border-right:2px solid #404040;border-bottom:2px solid #404040;font-size:14.5px;line-height:26px;padding-left:32px;overflow:hidden">Hydra EMS Worldwide - ...</div>
<div class="a t" style="left:994px;top:1245px;width:213px;height:28px;background:#D4D0C8;border-top:1px solid #fff;border-left:1px solid #fff;border-right:2px solid #404040;border-bottom:2px solid #404040;font-size:14.5px;line-height:26px;padding-left:32px;overflow:hidden">Downloads</div>
<div class="a t" style="left:1212px;top:1245px;width:212px;height:28px;background:#E8E6E2;border-top:1px solid #404040;border-left:1px solid #404040;border-right:1px solid #fff;border-bottom:1px solid #fff;font-size:14.5px;line-height:26px;padding-left:32px;overflow:hidden">c:\program files\nemesis...</div>
<svg class="a" style="left:783px;top:1248px" width="22" height="22" viewBox="0 0 22 22"><circle cx="11" cy="11" r="9.5" fill="#3A5FB0"/><path d="M11 1.5 A9.5 9.5 0 1 1 2 8 Q4 12 8 13 Q5 9 8 6 Q9 9 12 9 Q10 5 14 3 Q12 2 11 1.5Z" fill="#F07818"/><path d="M4 14 Q7 19 12 19 Q17 18 19 13 Q16 17 11 16 Q6 16 4 14Z" fill="#F4B030"/></svg>
<svg class="a" style="left:1002px;top:1248px" width="22" height="22" viewBox="0 0 22 22"><circle cx="11" cy="11" r="9.5" fill="#3A5FB0"/><path d="M11 1.5 A9.5 9.5 0 1 1 2 8 Q4 12 8 13 Q5 9 8 6 Q9 9 12 9 Q10 5 14 3 Q12 2 11 1.5Z" fill="#F07818"/><path d="M4 14 Q7 19 12 19 Q17 18 19 13 Q16 17 11 16 Q6 16 4 14Z" fill="#F4B030"/></svg>
<svg class="a" style="left:1217px;top:1248px" width="22" height="22" viewBox="0 0 22 22"><rect x="1" y="1" width="20" height="20" fill="#F2EE1A"/><path d="M3 3 Q6 4 6 7 L6 9 Q6 11 8 11 Q6 11.5 6 14 L6 16 Q6 19 3 19" stroke="#111" stroke-width="1.6" fill="none"/><path d="M19 3 Q16 4 16 7 L16 9 Q16 11 14 11 Q16 11.5 16 14 L16 16 Q16 19 19 19" stroke="#111" stroke-width="1.6" fill="none"/><polygon points="11,7.5 13.5,11 11,14.5 8.5,11" fill="#E01818"/></svg>
<div class="a" style="left:1447px;top:1245px;width:253px;height:28px;border-top:1px solid #808080;border-left:1px solid #808080"></div>
<svg class="a" style="left:1449px;top:1248px" width="22" height="22" viewBox="0 0 22 22"><rect x="2" y="8" width="10" height="8" fill="#5A90D8" stroke="#2A4A90" stroke-width="1"/><rect x="9" y="3" width="10" height="8" fill="#3A60B0" stroke="#203070" stroke-width="1"/><rect x="4" y="17" width="8" height="3" fill="#8090B0"/></svg>
<svg class="a" style="left:1475px;top:1248px" width="22" height="22" viewBox="0 0 22 22"><circle cx="10" cy="10" r="8" fill="#F4C020"/><path d="M6 6 Q10 14 14 6" stroke="#202020" stroke-width="1.8" fill="none"/><circle cx="15" cy="16" r="5" fill="#E02020"/><path d="M13 14 L17 18 M17 14 L13 18" stroke="#fff" stroke-width="1.6"/></svg>
<svg class="a" style="left:1499px;top:1248px" width="22" height="22" viewBox="0 0 22 22"><path d="M3 8 Q11 1 19 8 L17 10 L5 10Z" fill="#3A6AC0"/><rect x="6" y="10" width="10" height="7" fill="#fff" stroke="#303030" stroke-width="1"/><rect x="8" y="11.5" width="6" height="4" fill="#3060C0"/><rect x="4" y="18" width="14" height="2" fill="#202020"/></svg>
<svg class="a" style="left:1522px;top:1248px" width="22" height="22" viewBox="0 0 22 22"><ellipse cx="10" cy="11" rx="7" ry="8" fill="#909090"/><ellipse cx="10" cy="11" rx="4" ry="5" fill="#606060"/><path d="M17 15 Q19 18 15 20" stroke="#A0A0D0" stroke-width="1.2" fill="none"/></svg>
<svg class="a" style="left:1547px;top:1248px" width="22" height="22" viewBox="0 0 22 22"><circle cx="12" cy="5" r="3" fill="#2060C0"/><path d="M5 14 Q8 6 13 9 L11 18Z" fill="#40A040"/><circle cx="6" cy="7" r="2" fill="#40A0E0"/><circle cx="15" cy="16" r="5" fill="#E02020"/><path d="M13 14 L17 18 M17 14 L13 18" stroke="#fff" stroke-width="1.6"/></svg>
<svg class="a" style="left:1571px;top:1248px" width="22" height="22" viewBox="0 0 22 22"><rect x="1" y="3" width="20" height="16" fill="#7A8A30"/><rect x="1" y="3" width="8" height="16" fill="#fff"/><path d="M3 13 Q8 6 14 10 Q10 13 7 12" stroke="#202020" stroke-width="1.8" fill="none"/></svg>
<svg class="a" style="left:1595px;top:1248px" width="22" height="22" viewBox="0 0 22 22"><circle cx="11" cy="10.5" r="8" fill="#4AA0E8"/><circle cx="11" cy="10.5" r="4.5" fill="#fff"/><path d="M11 10.5 L16 5" stroke="#2070C0" stroke-width="2"/><path d="M15 16 L19 20" stroke="#4AA0E8" stroke-width="3"/></svg>
<div class="a t" style="left:1629px;top:1250px;font-size:15px;color:#000">9:46 AM</div>
</body></html>
